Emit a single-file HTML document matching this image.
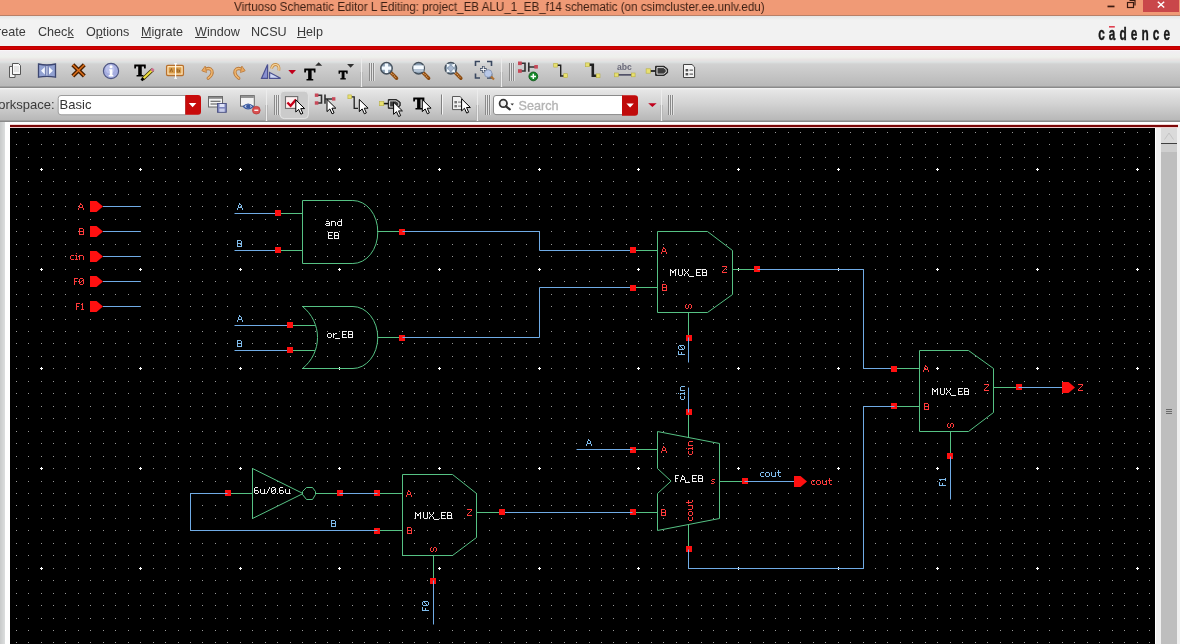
<!DOCTYPE html>
<html><head><meta charset="utf-8">
<style>
*{margin:0;padding:0;box-sizing:border-box}
html,body{width:1180px;height:644px;overflow:hidden;background:#f0f0f0;font-family:"Liberation Sans",sans-serif}
.a{position:absolute}
.mi,#title .t,svg{will-change:transform}
#title{left:0;top:0;width:1180px;height:16px;background:#f09a76;border-bottom:1px solid #b88068}
#title .t{left:234px;top:0px;font-size:12.3px;color:#3a1e12;white-space:nowrap;line-height:14px;transform:scaleX(0.946);transform-origin:0 0}
#menu{left:0;top:16px;width:1180px;height:30px;background:linear-gradient(#e4e6e6,#f2f2f2 4px,#f2f2f2)}
.mi{position:absolute;top:8px;font-size:12.6px;color:#3a3a3a;line-height:16px;white-space:nowrap}
.mi u{text-decoration:underline;text-decoration-thickness:1px;text-underline-offset:0.5px}
#red1{left:0;top:46px;width:1180px;height:4px;background:linear-gradient(#a80000,#d00000 1px,#d00000 3px,#a80000 4px)}
#tb1{left:0;top:50px;width:1180px;height:38px;background:linear-gradient(#fdfcfd 0px,#f2eef2 1px,#eef0ec 7px,#e8e2e2 10px,#dde2e2 12px,#d2d2d2 14px,#b8b8b8 36px,#8a8a8a 37px)}
#tb2{left:0;top:88px;width:1180px;height:34px;background:linear-gradient(#f6f6f6 0px,#e6e6e6 2px,#d2d2d2 16px,#b8b8b8 32px,#8a8a8a 33px)}
#cv{left:0;top:122px;width:1180px;height:522px;background:#f2f2f2}
</style></head><body>
<div id="title" class="a"><div class="a t">Virtuoso Schematic Editor L Editing: project_EB ALU_1_EB_f14 schematic (on csimcluster.ee.unlv.edu)</div>
</div>
<div id="menu" class="a">
<span class="mi" style="left:-3px">reate</span>
<span class="mi" style="left:38px">Chec<u>k</u></span>
<span class="mi" style="left:86px">O<u>p</u>tions</span>
<span class="mi" style="left:141px"><u>M</u>igrate</span>
<span class="mi" style="left:195px"><u>W</u>indow</span>
<span class="mi" style="left:251px">NCSU</span>
<span class="mi" style="left:297px"><u>H</u>elp</span>
</div>
<div id="red1" class="a"></div>
<div id="tb1" class="a"></div>
<div id="tb2" class="a"></div>
<div id="cv" class="a">
 <div class="a" style="left:0;top:0;width:5px;height:522px;background:linear-gradient(90deg,#c8caca,#dcdede)"></div>
 <div class="a" style="left:5px;top:0;width:5px;height:522px;background:#ffffff"></div>
</div>
<svg class="a" style="left:0;top:0" width="1180" height="644" font-family="Liberation Sans">
<!-- window controls -->
<rect x="1143" y="0" width="36" height="12" fill="#c9474a"/>
<path d="M1157.8 1.8 L1164.2 7.6 M1164.2 1.8 L1157.8 7.6" stroke="#fff" stroke-width="1.4"/>
<rect x="1107.5" y="5.6" width="7" height="1.7" fill="#3a1a10"/>
<rect x="1127.5" y="2.5" width="6" height="5" fill="none" stroke="#3a1a10" stroke-width="1.2"/>
<path d="M1129.5 0.5 H1135 V5.5" fill="none" stroke="#3a1a10" stroke-width="1.2"/>
<!-- cadence logo -->
<text x="0" y="0" font-size="16" font-weight="bold" fill="#1a1a1a" stroke="#1a1a1a" stroke-width="0.35" letter-spacing="5.5" transform="translate(1098.2,39.8) scale(0.74,1.2)">cadence</text><rect x="1109" y="26" width="5.8" height="1.6" fill="#e04050"/>
<!-- toolbar icons -->
<path d="M9.5 66.5 H15 V77.5 H9.5 Z" fill="#f4f4f4" stroke="#5a5a5a" stroke-width="1"/>
<path d="M12.5 63.5 H18.5 L20.5 65.5 V74.5 H12.5 Z" fill="#f8f8f8" stroke="#555" stroke-width="1"/>
<path d="M14 67 H19 M14 69 H19 M14 71 H19" stroke="#c8c8c8" stroke-width="0.8"/>
<path d="M38.5 64 Q47 66 55.5 64 V77.2 Q47 75.5 38.5 77.2 Z" fill="#92a2d2" stroke="#3c4670" stroke-width="1.3"/>
<rect x="45.3" y="66" width="3.2" height="9.5" fill="#6a78a8"/><rect x="46.2" y="66" width="1.4" height="9.5" fill="#c0cae8"/>
<path d="M41 70.8 L44.8 67 V74.6 Z M52.9 70.8 L49 67 V74.6 Z" fill="#f4f8ff"/>
<path d="M72.8 64.8 L84.3 76 M84.3 64.8 L72.8 76" stroke="#4a2000" stroke-width="4.2"/>
<path d="M72.8 64.8 L84.3 76 M84.3 64.8 L72.8 76" stroke="#e0701a" stroke-width="1.5"/>
<circle cx="111" cy="71" r="7.6" fill="#a6aee0" stroke="#4e5682" stroke-width="1.2"/>
<circle cx="110" cy="69" r="4.5" fill="#c4caf0" opacity="0.7"/>
<circle cx="111" cy="66.8" r="1.5" fill="#fff"/><path d="M109.2 69.3 H112.4 V75 H113.3 V76.4 H108.7 V75 H109.8 V70.6 H109.2 Z" fill="#fff"/>
<text x="134.6" y="75.8" font-family="Liberation Serif" font-weight="bold" font-size="16.5" fill="#000" stroke="#000" stroke-width="0.9">T</text>
<path d="M142.6 79.2 L152.8 69.6" stroke="#3a3000" stroke-width="3.6" stroke-linecap="butt"/>
<path d="M143 78.8 L152.4 70" stroke="#f0e040" stroke-width="2"/>
<path d="M151.4 70.8 L153.6 68.8" stroke="#d07090" stroke-width="3"/>
<path d="M141.4 80.4 L143.6 78.2" stroke="#000" stroke-width="2.6"/>
<rect x="166.6" y="65.3" width="16.8" height="10.2" rx="1.2" fill="#ffe6b8" stroke="#b8702c" stroke-width="1.3"/>
<rect x="168.6" y="67.3" width="12.8" height="6.2" fill="#d89a48"/>
<path d="M170 72 L171.5 68.5 L172.5 72 M177 68.5 V72 H179.5 V70 H177" fill="none" stroke="#8a5a20" stroke-width="0.8"/>
<path d="M175.6 63.5 V78.5 M174.2 63.8 H177 M174.2 78.2 H177" stroke="#fff" stroke-width="1.1"/>
<path d="M204 70 Q209.5 66.8 211.8 70.5 Q213.2 74.5 208.2 78.2" fill="none" stroke="#b8783a" stroke-width="3.2" stroke-linecap="round"/>
<path d="M204 70 Q209.5 66.8 211.8 70.5 Q213.2 74.5 208.2 78.2" fill="none" stroke="#f0b870" stroke-width="1.5" stroke-linecap="round"/>
<path d="M201.8 70.8 L205.2 66 L206.6 72.6 Z" fill="#eaa860" stroke="#b8783a" stroke-width="0.7"/>
<path d="M243 70 Q237.5 66.8 235.2 70.5 Q233.8 74.5 238.8 78.2" fill="none" stroke="#b8783a" stroke-width="3.2" stroke-linecap="round"/>
<path d="M243 70 Q237.5 66.8 235.2 70.5 Q233.8 74.5 238.8 78.2" fill="none" stroke="#f0b870" stroke-width="1.5" stroke-linecap="round"/>
<path d="M245.2 70.8 L241.8 66 L240.4 72.6 Z" fill="#eaa860" stroke="#b8783a" stroke-width="0.7"/>
<path d="M267.6 64.5 L261.5 78.3 H267.6 Z" fill="#8890d0" stroke="#4a5090" stroke-width="1.2"/>
<path d="M269.6 72.4 V78.3 H280.6 Z" fill="#d0d8f4" stroke="#4a5090" stroke-width="1.2"/>
<path d="M271.5 68.5 Q272.5 64.2 276 64.5 Q279.8 65.2 278.8 70.5" fill="none" stroke="#c89048" stroke-width="2.8"/>
<path d="M271.5 68.5 Q272.5 64.2 276 64.5 Q279.8 65.2 278.8 70.5" fill="none" stroke="#f8d8a0" stroke-width="1.2"/>
<path d="M288.3 70 H296 L292.15 74.3 Z" fill="#c0001c"/>
<text x="304.6" y="79.6" font-family="Liberation Serif" font-weight="bold" font-size="16.2" fill="#000" stroke="#000" stroke-width="0.9">T</text>
<path d="M315.2 65.8 L318.7 62.2 L322.2 65.8 Z" fill="#303030"/>
<text x="338.7" y="79.1" font-family="Liberation Serif" font-weight="bold" font-size="13" fill="#000" stroke="#000" stroke-width="0.8">T</text>
<path d="M347.1 63.9 H354.1 L350.6 67.7 Z" fill="#303030"/>
<rect x="361" y="56" width="1" height="31" fill="#ececec"/><rect x="360" y="72" width="1" height="15" fill="#b4b4b4" opacity="0.8"/><rect x="362" y="72" width="1" height="15" fill="#b4b4b4" opacity="0.8"/>
<rect x="369" y="63" width="1" height="18" fill="#8a8a8a"/><rect x="371" y="63" width="1" height="18" fill="#8a8a8a"/><rect x="373" y="63" width="1" height="18" fill="#8a8a8a"/><rect x="370" y="63" width="1" height="18" fill="#ececec" opacity="0.7"/><rect x="372" y="63" width="1" height="18" fill="#ececec" opacity="0.7"/><rect x="374" y="63" width="1" height="18" fill="#ececec" opacity="0.7"/>
<line x1="390.595" y1="72.295" x2="396.58" y2="78.28" stroke="#8a4a10" stroke-width="3.4" stroke-linecap="round"/><line x1="391.225" y1="72.925" x2="395.95" y2="77.65" stroke="#e0a060" stroke-width="1.4" stroke-dasharray="1 1"/><circle cx="386.5" cy="68.2" r="5.7" fill="#8ea2b6" stroke="#46525e" stroke-width="1.5"/><path d="M381.8 68.2 H391.2 M386.5 63.5 V72.9" stroke="#f4faff" stroke-width="3.2"/>
<line x1="422.69500000000005" y1="72.295" x2="428.68" y2="78.28" stroke="#8a4a10" stroke-width="3.4" stroke-linecap="round"/><line x1="423.32500000000005" y1="72.925" x2="428.05" y2="77.65" stroke="#e0a060" stroke-width="1.4" stroke-dasharray="1 1"/><circle cx="418.6" cy="68.2" r="5.7" fill="#8ea2b6" stroke="#46525e" stroke-width="1.5"/><rect x="413.4" y="65.4" width="10.4" height="3.8" fill="#f4faff"/><rect x="413.6" y="69.2" width="10" height="2.6" fill="#b8c8d8"/>
<line x1="454.89500000000004" y1="72.295" x2="460.88" y2="78.28" stroke="#8a4a10" stroke-width="3.4" stroke-linecap="round"/><line x1="455.52500000000003" y1="72.925" x2="460.25" y2="77.65" stroke="#e0a060" stroke-width="1.4" stroke-dasharray="1 1"/><circle cx="450.8" cy="68.2" r="5.7" fill="#8ea2b6" stroke="#46525e" stroke-width="1.5"/><path d="M446.2 63.6 l4 1.2 -2.8 2.8z M455.4 63.6 l-4 1.2 2.8 2.8z M446.2 72.8 l4 -1.2 -2.8 -2.8z M455.4 72.8 l-4 -1.2 2.8 -2.8z" fill="#f4faff"/><circle cx="450.8" cy="68.2" r="2.2" fill="#a8b8d0"/>
<path d="M475.5 66 V61.5 H480 M487 61.5 H491.5 V66 M475.5 73.5 V78 H480 M491.5 73.5 V78 H487" fill="none" stroke="#3a4860" stroke-width="1.6"/>
<path d="M480 69.4 H486.6 M483.3 66 V72.8" stroke="#3a4860" stroke-width="2.6"/><path d="M480.6 69.4 H486 M483.3 66.6 V72.2" stroke="#fff" stroke-width="1"/>
<line x1="490" y1="75.5" x2="494" y2="79.5" stroke="#b07030" stroke-width="2.2"/><circle cx="488.2" cy="73.5" r="3.8" fill="#b8c8e8" stroke="#8090b0" stroke-width="0.8"/>
<rect x="501" y="56" width="1" height="31" fill="#ececec"/><rect x="500" y="72" width="1" height="15" fill="#b4b4b4" opacity="0.8"/><rect x="502" y="72" width="1" height="15" fill="#b4b4b4" opacity="0.8"/>
<rect x="509" y="63" width="1" height="18" fill="#8a8a8a"/><rect x="511" y="63" width="1" height="18" fill="#8a8a8a"/><rect x="513" y="63" width="1" height="18" fill="#8a8a8a"/><rect x="510" y="63" width="1" height="18" fill="#ececec" opacity="0.7"/><rect x="512" y="63" width="1" height="18" fill="#ececec" opacity="0.7"/><rect x="514" y="63" width="1" height="18" fill="#ececec" opacity="0.7"/>
<path d="M521 63.3 H525 V71 H521 M528.8 62.5 V71.8 M528.8 67 H535" fill="none" stroke="#303030" stroke-width="1.6"/>
<rect x="518" y="61.5" width="3.8" height="3.6" fill="#c84858"/><rect x="518" y="69.2" width="3.8" height="3.6" fill="#c84858"/><rect x="534.3" y="65" width="3.6" height="3.6" fill="#c84858"/>
<circle cx="533.3" cy="76.4" r="4.4" fill="#148a28" stroke="#0a5014" stroke-width="0.8"/><path d="M530.6 76.4 H536 M533.3 73.7 V79.1" stroke="#fff" stroke-width="1.5"/>
<path d="M555.6 65.2 H560.7 V76 H565.6" fill="none" stroke="#202020" stroke-width="1.4"/>
<rect x="553.7" y="63.300000000000004" width="3.8" height="3.8" fill="#e8e070" stroke="#b8b040" stroke-width="0.6"/><rect x="563.7" y="73.69999999999999" width="3.8" height="3.8" fill="#e8e070" stroke="#b8b040" stroke-width="0.6"/>
<path d="M587.5 64.8 H592.8 V75.8 H598" fill="none" stroke="#202020" stroke-width="2.6"/>
<rect x="585.6" y="62.9" width="3.8" height="3.8" fill="#e8e070" stroke="#b8b040" stroke-width="0.6"/><rect x="596.2" y="73.89999999999999" width="3.8" height="3.8" fill="#e8e070" stroke="#b8b040" stroke-width="0.6"/>
<text x="617" y="69.8" font-size="8.6" fill="#6a6a7a" font-weight="bold">abc</text>
<path d="M616.4 74.9 H633.2" stroke="#202040" stroke-width="1.2"/><rect x="614.5" y="73.0" width="3.8" height="3.8" fill="#e8e070" stroke="#b8b040" stroke-width="0.6"/><rect x="631.3000000000001" y="73.0" width="3.8" height="3.8" fill="#e8e070" stroke="#b8b040" stroke-width="0.6"/>
<path d="M648.5 71 H656" stroke="#101010" stroke-width="1.6"/><rect x="646.0999999999999" y="68.8" width="4.4" height="4.4" fill="#e8e070" stroke="#b8b040" stroke-width="0.6"/>
<path d="M655.6 66.3 H664 L667.6 69 V72.8 L664 75.4 H655.6 Z" fill="#3c3c3c" stroke="#202020" stroke-width="1"/>
<path d="M657 67.6 H663.4 L666.2 69.6 V72.2 L663.4 74.1 H657 Z" fill="none" stroke="#fff" stroke-width="0.8"/>
<path d="M683.5 64.5 H692 L694.6 67 V77.5 H683.5 Z" fill="#f4f4f4" stroke="#444" stroke-width="1"/>
<rect x="685.6" y="69" width="2.6" height="2.4" fill="#555"/><rect x="685.6" y="73" width="2.6" height="2.4" fill="#555"/><path d="M689.5 70.2 H693 M689.5 74.2 H693" stroke="#666" stroke-width="1.2"/>
<text x="-1.8" y="108.6" font-size="13" fill="#3a3a3a">orkspace:</text>
<path d="M61 95.5 H185.5 V114.8 H61 Q58.2 114.8 58.2 112 V98.3 Q58.2 95.5 61 95.5 Z" fill="#fff" stroke="#9c9c9c" stroke-width="1"/>
<path d="M185.3 95 H198 Q201 95 201 98 V111.8 Q201 114.8 198 114.8 H185.3 Z" fill="#c80a0a"/>
<path d="M188.8 103 H196.4 L192.6 107.2 Z" fill="#fff"/>
<text x="59.6" y="108.6" font-size="13" fill="#333">Basic</text>
<rect x="208.5" y="96.5" width="14" height="10.5" fill="#f4f4f4" stroke="#6a6a6a" stroke-width="1"/><rect x="209" y="97" width="13" height="1.8" fill="#8a8a8a"/>
<path d="M210.5 101.3 H220.5 M210.5 104 H218" stroke="#505050" stroke-width="1.1"/>
<rect x="217.5" y="103.5" width="8.8" height="8.8" fill="#8088c0" stroke="#4a5080" stroke-width="0.9"/><rect x="219.5" y="104" width="5" height="3" fill="#e0e4f8"/><rect x="219.3" y="108.6" width="5.4" height="3.2" fill="#c8cce8"/>
<rect x="240.5" y="95.6" width="13.8" height="10.6" fill="#f2f2f2" stroke="#6a6a6a" stroke-width="1"/><rect x="241" y="96.1" width="12.8" height="1.8" fill="#8a8a8a"/>
<path d="M243.3 106.5 Q248 101.5 253.2 106.5 Q248 111.5 243.3 106.5 Z" fill="#c8d4f0" stroke="#3a5aa0" stroke-width="1.2"/><circle cx="248.3" cy="106.5" r="2.2" fill="#3a5aa0"/>
<circle cx="256.3" cy="110.2" r="3.9" fill="#d85050" stroke="#b03030" stroke-width="0.6"/><rect x="254.3" y="109.6" width="4" height="1.3" fill="#fff"/>
<rect x="266" y="89" width="1" height="32" fill="#ececec"/><rect x="265" y="105" width="1" height="16" fill="#b4b4b4" opacity="0.8"/><rect x="267" y="105" width="1" height="16" fill="#b4b4b4" opacity="0.8"/>
<rect x="274" y="95" width="1" height="20" fill="#8a8a8a"/><rect x="276" y="95" width="1" height="20" fill="#8a8a8a"/><rect x="278" y="95" width="1" height="20" fill="#8a8a8a"/><rect x="275" y="95" width="1" height="20" fill="#ececec" opacity="0.7"/><rect x="277" y="95" width="1" height="20" fill="#ececec" opacity="0.7"/><rect x="279" y="95" width="1" height="20" fill="#ececec" opacity="0.7"/>
<rect x="280.2" y="91.2" width="28.2" height="27.4" rx="4" fill="#cbcbcb" stroke="#e4e4e4" stroke-width="1"/>
<rect x="285.5" y="96.6" width="12.2" height="11.8" fill="#fdf0f0" stroke="#6c6c6c" stroke-width="1.1"/>
<path d="M287.4 102.5 L290.6 105.8 L296 99.5" fill="none" stroke="#c8001a" stroke-width="2.4"/>
<path d="M295.80 99.90 L295.80 112.00 L298.66 109.36 L300.86 114.20 L302.84 113.32 L300.75 108.59 L304.60 108.59Z" fill="#fff" stroke="#000" stroke-width="1" stroke-linejoin="miter"/>
<path d="M317 95.2 H321.5 V103 H317 M325 94.5 V103.8 M325 99 H333" fill="none" stroke="#303030" stroke-width="1.6"/>
<rect x="314.8" y="93.5" width="3.6" height="3.4" fill="#c84858"/><rect x="314.8" y="101.3" width="3.6" height="3.4" fill="#c84858"/><rect x="332" y="97.2" width="3.4" height="3.4" fill="#c84858"/>
<path d="M327.00 99.50 L327.00 111.60 L329.86 108.96 L332.06 113.80 L334.04 112.92 L331.95 108.19 L335.80 108.19Z" fill="#fff" stroke="#000" stroke-width="1" stroke-linejoin="miter"/>
<path d="M349.8 96.8 H354.2 V108.3 H358" fill="none" stroke="#202020" stroke-width="1.3"/><rect x="347.90000000000003" y="94.89999999999999" width="3.8" height="3.8" fill="#e8e070" stroke="#b8b040" stroke-width="0.6"/>
<path d="M359.30 99.50 L359.30 111.60 L362.16 108.96 L364.36 113.80 L366.34 112.92 L364.25 108.19 L368.10 108.19Z" fill="#fff" stroke="#000" stroke-width="1" stroke-linejoin="miter"/>
<path d="M381.7 103.6 H388.5" stroke="#101010" stroke-width="1.6"/><rect x="379.59999999999997" y="101.5" width="4.2" height="4.2" fill="#e8e070" stroke="#b8b040" stroke-width="0.6"/>
<path d="M388.3 99.6 H396.5 L400.2 102.3 V105.8 L396.5 108.3 H388.3 Z" fill="#3c3c3c" stroke="#202020" stroke-width="1"/>
<path d="M389.6 100.9 H395.9 L398.8 102.9 V105.2 L395.9 107 H389.6 Z" fill="none" stroke="#fff" stroke-width="0.8"/>
<path d="M393.60 102.20 L393.60 114.30 L396.46 111.66 L398.66 116.50 L400.64 115.62 L398.55 110.89 L402.40 110.89Z" fill="#fff" stroke="#000" stroke-width="1" stroke-linejoin="miter"/>
<text x="413.5" y="108.7" font-family="Liberation Serif" font-weight="bold" font-size="16" fill="#000" stroke="#000" stroke-width="0.9">T</text>
<path d="M422.30 99.50 L422.30 111.60 L425.16 108.96 L427.36 113.80 L429.34 112.92 L427.25 108.19 L431.10 108.19Z" fill="#fff" stroke="#000" stroke-width="1" stroke-linejoin="miter"/>
<rect x="441" y="94.5" width="1" height="20" fill="#808080"/><rect x="442" y="94.5" width="1" height="20" fill="#f4f4f4"/>
<path d="M452.5 96.5 H460 L462.6 99 V109.6 H452.5 Z" fill="#f0f0f0" stroke="#5a5a5a" stroke-width="1"/>
<rect x="454.4" y="101" width="2.6" height="2.4" fill="#777"/><rect x="454.4" y="105" width="2.6" height="2.4" fill="#777"/><path d="M458 102.2 H461.5 M458 106.2 H461.5" stroke="#888" stroke-width="1.2"/>
<path d="M461.60 98.80 L461.60 110.90 L464.46 108.26 L466.66 113.10 L468.64 112.22 L466.55 107.49 L470.40 107.49Z" fill="#fff" stroke="#000" stroke-width="1" stroke-linejoin="miter"/>
<rect x="477" y="89" width="1" height="32" fill="#ececec"/><rect x="476" y="105" width="1" height="16" fill="#b4b4b4" opacity="0.8"/><rect x="478" y="105" width="1" height="16" fill="#b4b4b4" opacity="0.8"/>
<rect x="485" y="95" width="1" height="20" fill="#8a8a8a"/><rect x="487" y="95" width="1" height="20" fill="#8a8a8a"/><rect x="489" y="95" width="1" height="20" fill="#8a8a8a"/><rect x="486" y="95" width="1" height="20" fill="#ececec" opacity="0.7"/><rect x="488" y="95" width="1" height="20" fill="#ececec" opacity="0.7"/><rect x="490" y="95" width="1" height="20" fill="#ececec" opacity="0.7"/>
<path d="M496 95.5 H622.5 V114.6 H496 Q493.5 114.6 493.5 112 V98 Q493.5 95.5 496 95.5 Z" fill="#fff" stroke="#8a8a8a" stroke-width="1"/>
<path d="M622 95.2 H634.8 Q638 95.2 638 98.4 V112.6 Q638 115.8 634.8 115.8 H622 Z" fill="#c00a0a"/>
<path d="M626.4 103.4 H633.8 L630.1 107.6 Z" fill="#fff"/>
<circle cx="503.3" cy="103.4" r="3.7" fill="#f0f0f0" stroke="#333" stroke-width="1.8"/><path d="M506 106.3 L509.8 109.4" stroke="#333" stroke-width="2.2" stroke-linecap="round"/><path d="M510.5 103.6 H514 L512.25 105.4 Z" fill="#333"/>
<text x="518.6" y="109.8" font-size="12.6" fill="#b4b4b4" stroke="#b4b4b4" stroke-width="0.35">Search</text>
<path d="M648.2 103.2 H656.6 L652.4 107 Z" fill="#c0001c"/>
<rect x="661" y="89" width="1" height="32" fill="#ececec"/><rect x="660" y="105" width="1" height="16" fill="#b4b4b4" opacity="0.8"/><rect x="662" y="105" width="1" height="16" fill="#b4b4b4" opacity="0.8"/>
<rect x="668" y="95" width="1" height="20" fill="#8a8a8a"/><rect x="670" y="95" width="1" height="20" fill="#8a8a8a"/><rect x="672" y="95" width="1" height="20" fill="#8a8a8a"/><rect x="669" y="95" width="1" height="20" fill="#ececec" opacity="0.7"/><rect x="671" y="95" width="1" height="20" fill="#ececec" opacity="0.7"/><rect x="673" y="95" width="1" height="20" fill="#ececec" opacity="0.7"/>
<!-- canvas frame -->
<rect x="10" y="122" width="1170" height="2" fill="#fff"/>
<rect x="10" y="124" width="1168" height="1" fill="#f4d8d8"/>
<rect x="10" y="125" width="1168" height="2" fill="#7c0808"/>
<rect x="10" y="127" width="1168" height="1" fill="#f0d0d0"/>
<rect x="1155" y="128" width="25" height="516" fill="#f0f0f0"/>
<rect x="1155" y="128" width="1" height="516" fill="#fff"/>
<rect x="1161" y="128" width="16" height="16" fill="#dadada"/>
<rect x="1161" y="143" width="16" height="1" fill="#404040"/>
<path d="M1164.5 139.5 L1169 133 L1173.5 139.5" fill="none" stroke="#c4c4c4" stroke-width="1"/>
<rect x="1161" y="144" width="16" height="500" fill="#bebebe"/>
<rect x="1161" y="144" width="16" height="8" fill="#cfcfcf"/>
<path d="M1166 409.5 H1172 M1166 411.5 H1172 M1166 413.5 H1172" stroke="#6a6a6a" stroke-width="1"/>
<rect x="10" y="128" width="1145" height="516" fill="#000"/>
<path d="M16 132h1v1h-1zM16 144h1v1h-1zM16 157h1v1h-1zM16 169h1v1h-1zM16 181h1v1h-1zM16 194h1v1h-1zM16 206h1v1h-1zM16 219h1v1h-1zM16 231h1v1h-1zM16 244h1v1h-1zM16 256h1v1h-1zM16 269h1v1h-1zM16 281h1v1h-1zM16 294h1v1h-1zM16 306h1v1h-1zM16 319h1v1h-1zM16 331h1v1h-1zM16 343h1v1h-1zM16 356h1v1h-1zM16 368h1v1h-1zM16 381h1v1h-1zM16 393h1v1h-1zM16 406h1v1h-1zM16 418h1v1h-1zM16 431h1v1h-1zM16 443h1v1h-1zM16 456h1v1h-1zM16 468h1v1h-1zM16 481h1v1h-1zM16 493h1v1h-1zM16 505h1v1h-1zM16 518h1v1h-1zM16 530h1v1h-1zM16 543h1v1h-1zM16 555h1v1h-1zM16 568h1v1h-1zM16 580h1v1h-1zM16 593h1v1h-1zM16 605h1v1h-1zM16 618h1v1h-1zM16 630h1v1h-1zM16 642h1v1h-1zM28 132h1v1h-1zM28 144h1v1h-1zM28 157h1v1h-1zM28 169h1v1h-1zM28 181h1v1h-1zM28 194h1v1h-1zM28 206h1v1h-1zM28 219h1v1h-1zM28 231h1v1h-1zM28 244h1v1h-1zM28 256h1v1h-1zM28 269h1v1h-1zM28 281h1v1h-1zM28 294h1v1h-1zM28 306h1v1h-1zM28 319h1v1h-1zM28 331h1v1h-1zM28 343h1v1h-1zM28 356h1v1h-1zM28 368h1v1h-1zM28 381h1v1h-1zM28 393h1v1h-1zM28 406h1v1h-1zM28 418h1v1h-1zM28 431h1v1h-1zM28 443h1v1h-1zM28 456h1v1h-1zM28 468h1v1h-1zM28 481h1v1h-1zM28 493h1v1h-1zM28 505h1v1h-1zM28 518h1v1h-1zM28 530h1v1h-1zM28 543h1v1h-1zM28 555h1v1h-1zM28 568h1v1h-1zM28 580h1v1h-1zM28 593h1v1h-1zM28 605h1v1h-1zM28 618h1v1h-1zM28 630h1v1h-1zM28 642h1v1h-1zM41 132h1v1h-1zM41 144h1v1h-1zM41 157h1v1h-1zM41 181h1v1h-1zM41 194h1v1h-1zM41 206h1v1h-1zM41 219h1v1h-1zM41 231h1v1h-1zM41 244h1v1h-1zM41 256h1v1h-1zM41 281h1v1h-1zM41 294h1v1h-1zM41 306h1v1h-1zM41 319h1v1h-1zM41 331h1v1h-1zM41 343h1v1h-1zM41 356h1v1h-1zM41 381h1v1h-1zM41 393h1v1h-1zM41 406h1v1h-1zM41 418h1v1h-1zM41 431h1v1h-1zM41 443h1v1h-1zM41 456h1v1h-1zM41 481h1v1h-1zM41 493h1v1h-1zM41 505h1v1h-1zM41 518h1v1h-1zM41 530h1v1h-1zM41 543h1v1h-1zM41 555h1v1h-1zM41 580h1v1h-1zM41 593h1v1h-1zM41 605h1v1h-1zM41 618h1v1h-1zM41 630h1v1h-1zM41 642h1v1h-1zM53 132h1v1h-1zM53 144h1v1h-1zM53 157h1v1h-1zM53 169h1v1h-1zM53 181h1v1h-1zM53 194h1v1h-1zM53 206h1v1h-1zM53 219h1v1h-1zM53 231h1v1h-1zM53 244h1v1h-1zM53 256h1v1h-1zM53 269h1v1h-1zM53 281h1v1h-1zM53 294h1v1h-1zM53 306h1v1h-1zM53 319h1v1h-1zM53 331h1v1h-1zM53 343h1v1h-1zM53 356h1v1h-1zM53 368h1v1h-1zM53 381h1v1h-1zM53 393h1v1h-1zM53 406h1v1h-1zM53 418h1v1h-1zM53 431h1v1h-1zM53 443h1v1h-1zM53 456h1v1h-1zM53 468h1v1h-1zM53 481h1v1h-1zM53 493h1v1h-1zM53 505h1v1h-1zM53 518h1v1h-1zM53 530h1v1h-1zM53 543h1v1h-1zM53 555h1v1h-1zM53 568h1v1h-1zM53 580h1v1h-1zM53 593h1v1h-1zM53 605h1v1h-1zM53 618h1v1h-1zM53 630h1v1h-1zM53 642h1v1h-1zM65 132h1v1h-1zM65 144h1v1h-1zM65 157h1v1h-1zM65 169h1v1h-1zM65 181h1v1h-1zM65 194h1v1h-1zM65 206h1v1h-1zM65 219h1v1h-1zM65 231h1v1h-1zM65 244h1v1h-1zM65 256h1v1h-1zM65 269h1v1h-1zM65 281h1v1h-1zM65 294h1v1h-1zM65 306h1v1h-1zM65 319h1v1h-1zM65 331h1v1h-1zM65 343h1v1h-1zM65 356h1v1h-1zM65 368h1v1h-1zM65 381h1v1h-1zM65 393h1v1h-1zM65 406h1v1h-1zM65 418h1v1h-1zM65 431h1v1h-1zM65 443h1v1h-1zM65 456h1v1h-1zM65 468h1v1h-1zM65 481h1v1h-1zM65 493h1v1h-1zM65 505h1v1h-1zM65 518h1v1h-1zM65 530h1v1h-1zM65 543h1v1h-1zM65 555h1v1h-1zM65 568h1v1h-1zM65 580h1v1h-1zM65 593h1v1h-1zM65 605h1v1h-1zM65 618h1v1h-1zM65 630h1v1h-1zM65 642h1v1h-1zM78 132h1v1h-1zM78 144h1v1h-1zM78 157h1v1h-1zM78 169h1v1h-1zM78 181h1v1h-1zM78 194h1v1h-1zM78 206h1v1h-1zM78 219h1v1h-1zM78 231h1v1h-1zM78 244h1v1h-1zM78 256h1v1h-1zM78 269h1v1h-1zM78 281h1v1h-1zM78 294h1v1h-1zM78 306h1v1h-1zM78 319h1v1h-1zM78 331h1v1h-1zM78 343h1v1h-1zM78 356h1v1h-1zM78 368h1v1h-1zM78 381h1v1h-1zM78 393h1v1h-1zM78 406h1v1h-1zM78 418h1v1h-1zM78 431h1v1h-1zM78 443h1v1h-1zM78 456h1v1h-1zM78 468h1v1h-1zM78 481h1v1h-1zM78 493h1v1h-1zM78 505h1v1h-1zM78 518h1v1h-1zM78 530h1v1h-1zM78 543h1v1h-1zM78 555h1v1h-1zM78 568h1v1h-1zM78 580h1v1h-1zM78 593h1v1h-1zM78 605h1v1h-1zM78 618h1v1h-1zM78 630h1v1h-1zM78 642h1v1h-1zM90 132h1v1h-1zM90 144h1v1h-1zM90 157h1v1h-1zM90 169h1v1h-1zM90 181h1v1h-1zM90 194h1v1h-1zM90 206h1v1h-1zM90 219h1v1h-1zM90 231h1v1h-1zM90 244h1v1h-1zM90 256h1v1h-1zM90 269h1v1h-1zM90 281h1v1h-1zM90 294h1v1h-1zM90 306h1v1h-1zM90 319h1v1h-1zM90 331h1v1h-1zM90 343h1v1h-1zM90 356h1v1h-1zM90 368h1v1h-1zM90 381h1v1h-1zM90 393h1v1h-1zM90 406h1v1h-1zM90 418h1v1h-1zM90 431h1v1h-1zM90 443h1v1h-1zM90 456h1v1h-1zM90 468h1v1h-1zM90 481h1v1h-1zM90 493h1v1h-1zM90 505h1v1h-1zM90 518h1v1h-1zM90 530h1v1h-1zM90 543h1v1h-1zM90 555h1v1h-1zM90 568h1v1h-1zM90 580h1v1h-1zM90 593h1v1h-1zM90 605h1v1h-1zM90 618h1v1h-1zM90 630h1v1h-1zM90 642h1v1h-1zM103 132h1v1h-1zM103 144h1v1h-1zM103 157h1v1h-1zM103 169h1v1h-1zM103 181h1v1h-1zM103 194h1v1h-1zM103 206h1v1h-1zM103 219h1v1h-1zM103 231h1v1h-1zM103 244h1v1h-1zM103 256h1v1h-1zM103 269h1v1h-1zM103 281h1v1h-1zM103 294h1v1h-1zM103 306h1v1h-1zM103 319h1v1h-1zM103 331h1v1h-1zM103 343h1v1h-1zM103 356h1v1h-1zM103 368h1v1h-1zM103 381h1v1h-1zM103 393h1v1h-1zM103 406h1v1h-1zM103 418h1v1h-1zM103 431h1v1h-1zM103 443h1v1h-1zM103 456h1v1h-1zM103 468h1v1h-1zM103 481h1v1h-1zM103 493h1v1h-1zM103 505h1v1h-1zM103 518h1v1h-1zM103 530h1v1h-1zM103 543h1v1h-1zM103 555h1v1h-1zM103 568h1v1h-1zM103 580h1v1h-1zM103 593h1v1h-1zM103 605h1v1h-1zM103 618h1v1h-1zM103 630h1v1h-1zM103 642h1v1h-1zM115 132h1v1h-1zM115 144h1v1h-1zM115 157h1v1h-1zM115 169h1v1h-1zM115 181h1v1h-1zM115 194h1v1h-1zM115 206h1v1h-1zM115 219h1v1h-1zM115 231h1v1h-1zM115 244h1v1h-1zM115 256h1v1h-1zM115 269h1v1h-1zM115 281h1v1h-1zM115 294h1v1h-1zM115 306h1v1h-1zM115 319h1v1h-1zM115 331h1v1h-1zM115 343h1v1h-1zM115 356h1v1h-1zM115 368h1v1h-1zM115 381h1v1h-1zM115 393h1v1h-1zM115 406h1v1h-1zM115 418h1v1h-1zM115 431h1v1h-1zM115 443h1v1h-1zM115 456h1v1h-1zM115 468h1v1h-1zM115 481h1v1h-1zM115 493h1v1h-1zM115 505h1v1h-1zM115 518h1v1h-1zM115 530h1v1h-1zM115 543h1v1h-1zM115 555h1v1h-1zM115 568h1v1h-1zM115 580h1v1h-1zM115 593h1v1h-1zM115 605h1v1h-1zM115 618h1v1h-1zM115 630h1v1h-1zM115 642h1v1h-1zM128 132h1v1h-1zM128 144h1v1h-1zM128 157h1v1h-1zM128 169h1v1h-1zM128 181h1v1h-1zM128 194h1v1h-1zM128 206h1v1h-1zM128 219h1v1h-1zM128 231h1v1h-1zM128 244h1v1h-1zM128 256h1v1h-1zM128 269h1v1h-1zM128 281h1v1h-1zM128 294h1v1h-1zM128 306h1v1h-1zM128 319h1v1h-1zM128 331h1v1h-1zM128 343h1v1h-1zM128 356h1v1h-1zM128 368h1v1h-1zM128 381h1v1h-1zM128 393h1v1h-1zM128 406h1v1h-1zM128 418h1v1h-1zM128 431h1v1h-1zM128 443h1v1h-1zM128 456h1v1h-1zM128 468h1v1h-1zM128 481h1v1h-1zM128 493h1v1h-1zM128 505h1v1h-1zM128 518h1v1h-1zM128 530h1v1h-1zM128 543h1v1h-1zM128 555h1v1h-1zM128 568h1v1h-1zM128 580h1v1h-1zM128 593h1v1h-1zM128 605h1v1h-1zM128 618h1v1h-1zM128 630h1v1h-1zM128 642h1v1h-1zM140 132h1v1h-1zM140 144h1v1h-1zM140 157h1v1h-1zM140 181h1v1h-1zM140 194h1v1h-1zM140 206h1v1h-1zM140 219h1v1h-1zM140 231h1v1h-1zM140 244h1v1h-1zM140 256h1v1h-1zM140 281h1v1h-1zM140 294h1v1h-1zM140 306h1v1h-1zM140 319h1v1h-1zM140 331h1v1h-1zM140 343h1v1h-1zM140 356h1v1h-1zM140 381h1v1h-1zM140 393h1v1h-1zM140 406h1v1h-1zM140 418h1v1h-1zM140 431h1v1h-1zM140 443h1v1h-1zM140 456h1v1h-1zM140 481h1v1h-1zM140 493h1v1h-1zM140 505h1v1h-1zM140 518h1v1h-1zM140 530h1v1h-1zM140 543h1v1h-1zM140 555h1v1h-1zM140 580h1v1h-1zM140 593h1v1h-1zM140 605h1v1h-1zM140 618h1v1h-1zM140 630h1v1h-1zM140 642h1v1h-1zM153 132h1v1h-1zM153 144h1v1h-1zM153 157h1v1h-1zM153 169h1v1h-1zM153 181h1v1h-1zM153 194h1v1h-1zM153 206h1v1h-1zM153 219h1v1h-1zM153 231h1v1h-1zM153 244h1v1h-1zM153 256h1v1h-1zM153 269h1v1h-1zM153 281h1v1h-1zM153 294h1v1h-1zM153 306h1v1h-1zM153 319h1v1h-1zM153 331h1v1h-1zM153 343h1v1h-1zM153 356h1v1h-1zM153 368h1v1h-1zM153 381h1v1h-1zM153 393h1v1h-1zM153 406h1v1h-1zM153 418h1v1h-1zM153 431h1v1h-1zM153 443h1v1h-1zM153 456h1v1h-1zM153 468h1v1h-1zM153 481h1v1h-1zM153 493h1v1h-1zM153 505h1v1h-1zM153 518h1v1h-1zM153 530h1v1h-1zM153 543h1v1h-1zM153 555h1v1h-1zM153 568h1v1h-1zM153 580h1v1h-1zM153 593h1v1h-1zM153 605h1v1h-1zM153 618h1v1h-1zM153 630h1v1h-1zM153 642h1v1h-1zM165 132h1v1h-1zM165 144h1v1h-1zM165 157h1v1h-1zM165 169h1v1h-1zM165 181h1v1h-1zM165 194h1v1h-1zM165 206h1v1h-1zM165 219h1v1h-1zM165 231h1v1h-1zM165 244h1v1h-1zM165 256h1v1h-1zM165 269h1v1h-1zM165 281h1v1h-1zM165 294h1v1h-1zM165 306h1v1h-1zM165 319h1v1h-1zM165 331h1v1h-1zM165 343h1v1h-1zM165 356h1v1h-1zM165 368h1v1h-1zM165 381h1v1h-1zM165 393h1v1h-1zM165 406h1v1h-1zM165 418h1v1h-1zM165 431h1v1h-1zM165 443h1v1h-1zM165 456h1v1h-1zM165 468h1v1h-1zM165 481h1v1h-1zM165 493h1v1h-1zM165 505h1v1h-1zM165 518h1v1h-1zM165 530h1v1h-1zM165 543h1v1h-1zM165 555h1v1h-1zM165 568h1v1h-1zM165 580h1v1h-1zM165 593h1v1h-1zM165 605h1v1h-1zM165 618h1v1h-1zM165 630h1v1h-1zM165 642h1v1h-1zM178 132h1v1h-1zM178 144h1v1h-1zM178 157h1v1h-1zM178 169h1v1h-1zM178 181h1v1h-1zM178 194h1v1h-1zM178 206h1v1h-1zM178 219h1v1h-1zM178 231h1v1h-1zM178 244h1v1h-1zM178 256h1v1h-1zM178 269h1v1h-1zM178 281h1v1h-1zM178 294h1v1h-1zM178 306h1v1h-1zM178 319h1v1h-1zM178 331h1v1h-1zM178 343h1v1h-1zM178 356h1v1h-1zM178 368h1v1h-1zM178 381h1v1h-1zM178 393h1v1h-1zM178 406h1v1h-1zM178 418h1v1h-1zM178 431h1v1h-1zM178 443h1v1h-1zM178 456h1v1h-1zM178 468h1v1h-1zM178 481h1v1h-1zM178 493h1v1h-1zM178 505h1v1h-1zM178 518h1v1h-1zM178 530h1v1h-1zM178 543h1v1h-1zM178 555h1v1h-1zM178 568h1v1h-1zM178 580h1v1h-1zM178 593h1v1h-1zM178 605h1v1h-1zM178 618h1v1h-1zM178 630h1v1h-1zM178 642h1v1h-1zM190 132h1v1h-1zM190 144h1v1h-1zM190 157h1v1h-1zM190 169h1v1h-1zM190 181h1v1h-1zM190 194h1v1h-1zM190 206h1v1h-1zM190 219h1v1h-1zM190 231h1v1h-1zM190 244h1v1h-1zM190 256h1v1h-1zM190 269h1v1h-1zM190 281h1v1h-1zM190 294h1v1h-1zM190 306h1v1h-1zM190 319h1v1h-1zM190 331h1v1h-1zM190 343h1v1h-1zM190 356h1v1h-1zM190 368h1v1h-1zM190 381h1v1h-1zM190 393h1v1h-1zM190 406h1v1h-1zM190 418h1v1h-1zM190 431h1v1h-1zM190 443h1v1h-1zM190 456h1v1h-1zM190 468h1v1h-1zM190 481h1v1h-1zM190 493h1v1h-1zM190 505h1v1h-1zM190 518h1v1h-1zM190 530h1v1h-1zM190 543h1v1h-1zM190 555h1v1h-1zM190 568h1v1h-1zM190 580h1v1h-1zM190 593h1v1h-1zM190 605h1v1h-1zM190 618h1v1h-1zM190 630h1v1h-1zM190 642h1v1h-1zM202 132h1v1h-1zM202 144h1v1h-1zM202 157h1v1h-1zM202 169h1v1h-1zM202 181h1v1h-1zM202 194h1v1h-1zM202 206h1v1h-1zM202 219h1v1h-1zM202 231h1v1h-1zM202 244h1v1h-1zM202 256h1v1h-1zM202 269h1v1h-1zM202 281h1v1h-1zM202 294h1v1h-1zM202 306h1v1h-1zM202 319h1v1h-1zM202 331h1v1h-1zM202 343h1v1h-1zM202 356h1v1h-1zM202 368h1v1h-1zM202 381h1v1h-1zM202 393h1v1h-1zM202 406h1v1h-1zM202 418h1v1h-1zM202 431h1v1h-1zM202 443h1v1h-1zM202 456h1v1h-1zM202 468h1v1h-1zM202 481h1v1h-1zM202 493h1v1h-1zM202 505h1v1h-1zM202 518h1v1h-1zM202 530h1v1h-1zM202 543h1v1h-1zM202 555h1v1h-1zM202 568h1v1h-1zM202 580h1v1h-1zM202 593h1v1h-1zM202 605h1v1h-1zM202 618h1v1h-1zM202 630h1v1h-1zM202 642h1v1h-1zM215 132h1v1h-1zM215 144h1v1h-1zM215 157h1v1h-1zM215 169h1v1h-1zM215 181h1v1h-1zM215 194h1v1h-1zM215 206h1v1h-1zM215 219h1v1h-1zM215 231h1v1h-1zM215 244h1v1h-1zM215 256h1v1h-1zM215 269h1v1h-1zM215 281h1v1h-1zM215 294h1v1h-1zM215 306h1v1h-1zM215 319h1v1h-1zM215 331h1v1h-1zM215 343h1v1h-1zM215 356h1v1h-1zM215 368h1v1h-1zM215 381h1v1h-1zM215 393h1v1h-1zM215 406h1v1h-1zM215 418h1v1h-1zM215 431h1v1h-1zM215 443h1v1h-1zM215 456h1v1h-1zM215 468h1v1h-1zM215 481h1v1h-1zM215 493h1v1h-1zM215 505h1v1h-1zM215 518h1v1h-1zM215 530h1v1h-1zM215 543h1v1h-1zM215 555h1v1h-1zM215 568h1v1h-1zM215 580h1v1h-1zM215 593h1v1h-1zM215 605h1v1h-1zM215 618h1v1h-1zM215 630h1v1h-1zM215 642h1v1h-1zM227 132h1v1h-1zM227 144h1v1h-1zM227 157h1v1h-1zM227 169h1v1h-1zM227 181h1v1h-1zM227 194h1v1h-1zM227 206h1v1h-1zM227 219h1v1h-1zM227 231h1v1h-1zM227 244h1v1h-1zM227 256h1v1h-1zM227 269h1v1h-1zM227 281h1v1h-1zM227 294h1v1h-1zM227 306h1v1h-1zM227 319h1v1h-1zM227 331h1v1h-1zM227 343h1v1h-1zM227 356h1v1h-1zM227 368h1v1h-1zM227 381h1v1h-1zM227 393h1v1h-1zM227 406h1v1h-1zM227 418h1v1h-1zM227 431h1v1h-1zM227 443h1v1h-1zM227 456h1v1h-1zM227 468h1v1h-1zM227 481h1v1h-1zM227 493h1v1h-1zM227 505h1v1h-1zM227 518h1v1h-1zM227 530h1v1h-1zM227 543h1v1h-1zM227 555h1v1h-1zM227 568h1v1h-1zM227 580h1v1h-1zM227 593h1v1h-1zM227 605h1v1h-1zM227 618h1v1h-1zM227 630h1v1h-1zM227 642h1v1h-1zM240 132h1v1h-1zM240 144h1v1h-1zM240 157h1v1h-1zM240 181h1v1h-1zM240 194h1v1h-1zM240 206h1v1h-1zM240 219h1v1h-1zM240 231h1v1h-1zM240 244h1v1h-1zM240 256h1v1h-1zM240 281h1v1h-1zM240 294h1v1h-1zM240 306h1v1h-1zM240 319h1v1h-1zM240 331h1v1h-1zM240 343h1v1h-1zM240 356h1v1h-1zM240 381h1v1h-1zM240 393h1v1h-1zM240 406h1v1h-1zM240 418h1v1h-1zM240 431h1v1h-1zM240 443h1v1h-1zM240 456h1v1h-1zM240 481h1v1h-1zM240 493h1v1h-1zM240 505h1v1h-1zM240 518h1v1h-1zM240 530h1v1h-1zM240 543h1v1h-1zM240 555h1v1h-1zM240 580h1v1h-1zM240 593h1v1h-1zM240 605h1v1h-1zM240 618h1v1h-1zM240 630h1v1h-1zM240 642h1v1h-1zM252 132h1v1h-1zM252 144h1v1h-1zM252 157h1v1h-1zM252 169h1v1h-1zM252 181h1v1h-1zM252 194h1v1h-1zM252 206h1v1h-1zM252 219h1v1h-1zM252 231h1v1h-1zM252 244h1v1h-1zM252 256h1v1h-1zM252 269h1v1h-1zM252 281h1v1h-1zM252 294h1v1h-1zM252 306h1v1h-1zM252 319h1v1h-1zM252 331h1v1h-1zM252 343h1v1h-1zM252 356h1v1h-1zM252 368h1v1h-1zM252 381h1v1h-1zM252 393h1v1h-1zM252 406h1v1h-1zM252 418h1v1h-1zM252 431h1v1h-1zM252 443h1v1h-1zM252 456h1v1h-1zM252 468h1v1h-1zM252 481h1v1h-1zM252 493h1v1h-1zM252 505h1v1h-1zM252 518h1v1h-1zM252 530h1v1h-1zM252 543h1v1h-1zM252 555h1v1h-1zM252 568h1v1h-1zM252 580h1v1h-1zM252 593h1v1h-1zM252 605h1v1h-1zM252 618h1v1h-1zM252 630h1v1h-1zM252 642h1v1h-1zM265 132h1v1h-1zM265 144h1v1h-1zM265 157h1v1h-1zM265 169h1v1h-1zM265 181h1v1h-1zM265 194h1v1h-1zM265 206h1v1h-1zM265 219h1v1h-1zM265 231h1v1h-1zM265 244h1v1h-1zM265 256h1v1h-1zM265 269h1v1h-1zM265 281h1v1h-1zM265 294h1v1h-1zM265 306h1v1h-1zM265 319h1v1h-1zM265 331h1v1h-1zM265 343h1v1h-1zM265 356h1v1h-1zM265 368h1v1h-1zM265 381h1v1h-1zM265 393h1v1h-1zM265 406h1v1h-1zM265 418h1v1h-1zM265 431h1v1h-1zM265 443h1v1h-1zM265 456h1v1h-1zM265 468h1v1h-1zM265 481h1v1h-1zM265 493h1v1h-1zM265 505h1v1h-1zM265 518h1v1h-1zM265 530h1v1h-1zM265 543h1v1h-1zM265 555h1v1h-1zM265 568h1v1h-1zM265 580h1v1h-1zM265 593h1v1h-1zM265 605h1v1h-1zM265 618h1v1h-1zM265 630h1v1h-1zM265 642h1v1h-1zM277 132h1v1h-1zM277 144h1v1h-1zM277 157h1v1h-1zM277 169h1v1h-1zM277 181h1v1h-1zM277 194h1v1h-1zM277 206h1v1h-1zM277 219h1v1h-1zM277 231h1v1h-1zM277 244h1v1h-1zM277 256h1v1h-1zM277 269h1v1h-1zM277 281h1v1h-1zM277 294h1v1h-1zM277 306h1v1h-1zM277 319h1v1h-1zM277 331h1v1h-1zM277 343h1v1h-1zM277 356h1v1h-1zM277 368h1v1h-1zM277 381h1v1h-1zM277 393h1v1h-1zM277 406h1v1h-1zM277 418h1v1h-1zM277 431h1v1h-1zM277 443h1v1h-1zM277 456h1v1h-1zM277 468h1v1h-1zM277 481h1v1h-1zM277 493h1v1h-1zM277 505h1v1h-1zM277 518h1v1h-1zM277 530h1v1h-1zM277 543h1v1h-1zM277 555h1v1h-1zM277 568h1v1h-1zM277 580h1v1h-1zM277 593h1v1h-1zM277 605h1v1h-1zM277 618h1v1h-1zM277 630h1v1h-1zM277 642h1v1h-1zM290 132h1v1h-1zM290 144h1v1h-1zM290 157h1v1h-1zM290 169h1v1h-1zM290 181h1v1h-1zM290 194h1v1h-1zM290 206h1v1h-1zM290 219h1v1h-1zM290 231h1v1h-1zM290 244h1v1h-1zM290 256h1v1h-1zM290 269h1v1h-1zM290 281h1v1h-1zM290 294h1v1h-1zM290 306h1v1h-1zM290 319h1v1h-1zM290 331h1v1h-1zM290 343h1v1h-1zM290 356h1v1h-1zM290 368h1v1h-1zM290 381h1v1h-1zM290 393h1v1h-1zM290 406h1v1h-1zM290 418h1v1h-1zM290 431h1v1h-1zM290 443h1v1h-1zM290 456h1v1h-1zM290 468h1v1h-1zM290 481h1v1h-1zM290 493h1v1h-1zM290 505h1v1h-1zM290 518h1v1h-1zM290 530h1v1h-1zM290 543h1v1h-1zM290 555h1v1h-1zM290 568h1v1h-1zM290 580h1v1h-1zM290 593h1v1h-1zM290 605h1v1h-1zM290 618h1v1h-1zM290 630h1v1h-1zM290 642h1v1h-1zM302 132h1v1h-1zM302 144h1v1h-1zM302 157h1v1h-1zM302 169h1v1h-1zM302 181h1v1h-1zM302 194h1v1h-1zM302 206h1v1h-1zM302 219h1v1h-1zM302 231h1v1h-1zM302 244h1v1h-1zM302 256h1v1h-1zM302 269h1v1h-1zM302 281h1v1h-1zM302 294h1v1h-1zM302 306h1v1h-1zM302 319h1v1h-1zM302 331h1v1h-1zM302 343h1v1h-1zM302 356h1v1h-1zM302 368h1v1h-1zM302 381h1v1h-1zM302 393h1v1h-1zM302 406h1v1h-1zM302 418h1v1h-1zM302 431h1v1h-1zM302 443h1v1h-1zM302 456h1v1h-1zM302 468h1v1h-1zM302 481h1v1h-1zM302 493h1v1h-1zM302 505h1v1h-1zM302 518h1v1h-1zM302 530h1v1h-1zM302 543h1v1h-1zM302 555h1v1h-1zM302 568h1v1h-1zM302 580h1v1h-1zM302 593h1v1h-1zM302 605h1v1h-1zM302 618h1v1h-1zM302 630h1v1h-1zM302 642h1v1h-1zM315 132h1v1h-1zM315 144h1v1h-1zM315 157h1v1h-1zM315 169h1v1h-1zM315 181h1v1h-1zM315 194h1v1h-1zM315 206h1v1h-1zM315 219h1v1h-1zM315 231h1v1h-1zM315 244h1v1h-1zM315 256h1v1h-1zM315 269h1v1h-1zM315 281h1v1h-1zM315 294h1v1h-1zM315 306h1v1h-1zM315 319h1v1h-1zM315 331h1v1h-1zM315 343h1v1h-1zM315 356h1v1h-1zM315 368h1v1h-1zM315 381h1v1h-1zM315 393h1v1h-1zM315 406h1v1h-1zM315 418h1v1h-1zM315 431h1v1h-1zM315 443h1v1h-1zM315 456h1v1h-1zM315 468h1v1h-1zM315 481h1v1h-1zM315 493h1v1h-1zM315 505h1v1h-1zM315 518h1v1h-1zM315 530h1v1h-1zM315 543h1v1h-1zM315 555h1v1h-1zM315 568h1v1h-1zM315 580h1v1h-1zM315 593h1v1h-1zM315 605h1v1h-1zM315 618h1v1h-1zM315 630h1v1h-1zM315 642h1v1h-1zM327 132h1v1h-1zM327 144h1v1h-1zM327 157h1v1h-1zM327 169h1v1h-1zM327 181h1v1h-1zM327 194h1v1h-1zM327 206h1v1h-1zM327 219h1v1h-1zM327 231h1v1h-1zM327 244h1v1h-1zM327 256h1v1h-1zM327 269h1v1h-1zM327 281h1v1h-1zM327 294h1v1h-1zM327 306h1v1h-1zM327 319h1v1h-1zM327 331h1v1h-1zM327 343h1v1h-1zM327 356h1v1h-1zM327 368h1v1h-1zM327 381h1v1h-1zM327 393h1v1h-1zM327 406h1v1h-1zM327 418h1v1h-1zM327 431h1v1h-1zM327 443h1v1h-1zM327 456h1v1h-1zM327 468h1v1h-1zM327 481h1v1h-1zM327 493h1v1h-1zM327 505h1v1h-1zM327 518h1v1h-1zM327 530h1v1h-1zM327 543h1v1h-1zM327 555h1v1h-1zM327 568h1v1h-1zM327 580h1v1h-1zM327 593h1v1h-1zM327 605h1v1h-1zM327 618h1v1h-1zM327 630h1v1h-1zM327 642h1v1h-1zM339 132h1v1h-1zM339 144h1v1h-1zM339 157h1v1h-1zM339 181h1v1h-1zM339 194h1v1h-1zM339 206h1v1h-1zM339 219h1v1h-1zM339 231h1v1h-1zM339 244h1v1h-1zM339 256h1v1h-1zM339 281h1v1h-1zM339 294h1v1h-1zM339 306h1v1h-1zM339 319h1v1h-1zM339 331h1v1h-1zM339 343h1v1h-1zM339 356h1v1h-1zM339 381h1v1h-1zM339 393h1v1h-1zM339 406h1v1h-1zM339 418h1v1h-1zM339 431h1v1h-1zM339 443h1v1h-1zM339 456h1v1h-1zM339 481h1v1h-1zM339 493h1v1h-1zM339 505h1v1h-1zM339 518h1v1h-1zM339 530h1v1h-1zM339 543h1v1h-1zM339 555h1v1h-1zM339 580h1v1h-1zM339 593h1v1h-1zM339 605h1v1h-1zM339 618h1v1h-1zM339 630h1v1h-1zM339 642h1v1h-1zM352 132h1v1h-1zM352 144h1v1h-1zM352 157h1v1h-1zM352 169h1v1h-1zM352 181h1v1h-1zM352 194h1v1h-1zM352 206h1v1h-1zM352 219h1v1h-1zM352 231h1v1h-1zM352 244h1v1h-1zM352 256h1v1h-1zM352 269h1v1h-1zM352 281h1v1h-1zM352 294h1v1h-1zM352 306h1v1h-1zM352 319h1v1h-1zM352 331h1v1h-1zM352 343h1v1h-1zM352 356h1v1h-1zM352 368h1v1h-1zM352 381h1v1h-1zM352 393h1v1h-1zM352 406h1v1h-1zM352 418h1v1h-1zM352 431h1v1h-1zM352 443h1v1h-1zM352 456h1v1h-1zM352 468h1v1h-1zM352 481h1v1h-1zM352 493h1v1h-1zM352 505h1v1h-1zM352 518h1v1h-1zM352 530h1v1h-1zM352 543h1v1h-1zM352 555h1v1h-1zM352 568h1v1h-1zM352 580h1v1h-1zM352 593h1v1h-1zM352 605h1v1h-1zM352 618h1v1h-1zM352 630h1v1h-1zM352 642h1v1h-1zM364 132h1v1h-1zM364 144h1v1h-1zM364 157h1v1h-1zM364 169h1v1h-1zM364 181h1v1h-1zM364 194h1v1h-1zM364 206h1v1h-1zM364 219h1v1h-1zM364 231h1v1h-1zM364 244h1v1h-1zM364 256h1v1h-1zM364 269h1v1h-1zM364 281h1v1h-1zM364 294h1v1h-1zM364 306h1v1h-1zM364 319h1v1h-1zM364 331h1v1h-1zM364 343h1v1h-1zM364 356h1v1h-1zM364 368h1v1h-1zM364 381h1v1h-1zM364 393h1v1h-1zM364 406h1v1h-1zM364 418h1v1h-1zM364 431h1v1h-1zM364 443h1v1h-1zM364 456h1v1h-1zM364 468h1v1h-1zM364 481h1v1h-1zM364 493h1v1h-1zM364 505h1v1h-1zM364 518h1v1h-1zM364 530h1v1h-1zM364 543h1v1h-1zM364 555h1v1h-1zM364 568h1v1h-1zM364 580h1v1h-1zM364 593h1v1h-1zM364 605h1v1h-1zM364 618h1v1h-1zM364 630h1v1h-1zM364 642h1v1h-1zM377 132h1v1h-1zM377 144h1v1h-1zM377 157h1v1h-1zM377 169h1v1h-1zM377 181h1v1h-1zM377 194h1v1h-1zM377 206h1v1h-1zM377 219h1v1h-1zM377 231h1v1h-1zM377 244h1v1h-1zM377 256h1v1h-1zM377 269h1v1h-1zM377 281h1v1h-1zM377 294h1v1h-1zM377 306h1v1h-1zM377 319h1v1h-1zM377 331h1v1h-1zM377 343h1v1h-1zM377 356h1v1h-1zM377 368h1v1h-1zM377 381h1v1h-1zM377 393h1v1h-1zM377 406h1v1h-1zM377 418h1v1h-1zM377 431h1v1h-1zM377 443h1v1h-1zM377 456h1v1h-1zM377 468h1v1h-1zM377 481h1v1h-1zM377 493h1v1h-1zM377 505h1v1h-1zM377 518h1v1h-1zM377 530h1v1h-1zM377 543h1v1h-1zM377 555h1v1h-1zM377 568h1v1h-1zM377 580h1v1h-1zM377 593h1v1h-1zM377 605h1v1h-1zM377 618h1v1h-1zM377 630h1v1h-1zM377 642h1v1h-1zM389 132h1v1h-1zM389 144h1v1h-1zM389 157h1v1h-1zM389 169h1v1h-1zM389 181h1v1h-1zM389 194h1v1h-1zM389 206h1v1h-1zM389 219h1v1h-1zM389 231h1v1h-1zM389 244h1v1h-1zM389 256h1v1h-1zM389 269h1v1h-1zM389 281h1v1h-1zM389 294h1v1h-1zM389 306h1v1h-1zM389 319h1v1h-1zM389 331h1v1h-1zM389 343h1v1h-1zM389 356h1v1h-1zM389 368h1v1h-1zM389 381h1v1h-1zM389 393h1v1h-1zM389 406h1v1h-1zM389 418h1v1h-1zM389 431h1v1h-1zM389 443h1v1h-1zM389 456h1v1h-1zM389 468h1v1h-1zM389 481h1v1h-1zM389 493h1v1h-1zM389 505h1v1h-1zM389 518h1v1h-1zM389 530h1v1h-1zM389 543h1v1h-1zM389 555h1v1h-1zM389 568h1v1h-1zM389 580h1v1h-1zM389 593h1v1h-1zM389 605h1v1h-1zM389 618h1v1h-1zM389 630h1v1h-1zM389 642h1v1h-1zM402 132h1v1h-1zM402 144h1v1h-1zM402 157h1v1h-1zM402 169h1v1h-1zM402 181h1v1h-1zM402 194h1v1h-1zM402 206h1v1h-1zM402 219h1v1h-1zM402 231h1v1h-1zM402 244h1v1h-1zM402 256h1v1h-1zM402 269h1v1h-1zM402 281h1v1h-1zM402 294h1v1h-1zM402 306h1v1h-1zM402 319h1v1h-1zM402 331h1v1h-1zM402 343h1v1h-1zM402 356h1v1h-1zM402 368h1v1h-1zM402 381h1v1h-1zM402 393h1v1h-1zM402 406h1v1h-1zM402 418h1v1h-1zM402 431h1v1h-1zM402 443h1v1h-1zM402 456h1v1h-1zM402 468h1v1h-1zM402 481h1v1h-1zM402 493h1v1h-1zM402 505h1v1h-1zM402 518h1v1h-1zM402 530h1v1h-1zM402 543h1v1h-1zM402 555h1v1h-1zM402 568h1v1h-1zM402 580h1v1h-1zM402 593h1v1h-1zM402 605h1v1h-1zM402 618h1v1h-1zM402 630h1v1h-1zM402 642h1v1h-1zM414 132h1v1h-1zM414 144h1v1h-1zM414 157h1v1h-1zM414 169h1v1h-1zM414 181h1v1h-1zM414 194h1v1h-1zM414 206h1v1h-1zM414 219h1v1h-1zM414 231h1v1h-1zM414 244h1v1h-1zM414 256h1v1h-1zM414 269h1v1h-1zM414 281h1v1h-1zM414 294h1v1h-1zM414 306h1v1h-1zM414 319h1v1h-1zM414 331h1v1h-1zM414 343h1v1h-1zM414 356h1v1h-1zM414 368h1v1h-1zM414 381h1v1h-1zM414 393h1v1h-1zM414 406h1v1h-1zM414 418h1v1h-1zM414 431h1v1h-1zM414 443h1v1h-1zM414 456h1v1h-1zM414 468h1v1h-1zM414 481h1v1h-1zM414 493h1v1h-1zM414 505h1v1h-1zM414 518h1v1h-1zM414 530h1v1h-1zM414 543h1v1h-1zM414 555h1v1h-1zM414 568h1v1h-1zM414 580h1v1h-1zM414 593h1v1h-1zM414 605h1v1h-1zM414 618h1v1h-1zM414 630h1v1h-1zM414 642h1v1h-1zM427 132h1v1h-1zM427 144h1v1h-1zM427 157h1v1h-1zM427 169h1v1h-1zM427 181h1v1h-1zM427 194h1v1h-1zM427 206h1v1h-1zM427 219h1v1h-1zM427 231h1v1h-1zM427 244h1v1h-1zM427 256h1v1h-1zM427 269h1v1h-1zM427 281h1v1h-1zM427 294h1v1h-1zM427 306h1v1h-1zM427 319h1v1h-1zM427 331h1v1h-1zM427 343h1v1h-1zM427 356h1v1h-1zM427 368h1v1h-1zM427 381h1v1h-1zM427 393h1v1h-1zM427 406h1v1h-1zM427 418h1v1h-1zM427 431h1v1h-1zM427 443h1v1h-1zM427 456h1v1h-1zM427 468h1v1h-1zM427 481h1v1h-1zM427 493h1v1h-1zM427 505h1v1h-1zM427 518h1v1h-1zM427 530h1v1h-1zM427 543h1v1h-1zM427 555h1v1h-1zM427 568h1v1h-1zM427 580h1v1h-1zM427 593h1v1h-1zM427 605h1v1h-1zM427 618h1v1h-1zM427 630h1v1h-1zM427 642h1v1h-1zM439 132h1v1h-1zM439 144h1v1h-1zM439 157h1v1h-1zM439 181h1v1h-1zM439 194h1v1h-1zM439 206h1v1h-1zM439 219h1v1h-1zM439 231h1v1h-1zM439 244h1v1h-1zM439 256h1v1h-1zM439 281h1v1h-1zM439 294h1v1h-1zM439 306h1v1h-1zM439 319h1v1h-1zM439 331h1v1h-1zM439 343h1v1h-1zM439 356h1v1h-1zM439 381h1v1h-1zM439 393h1v1h-1zM439 406h1v1h-1zM439 418h1v1h-1zM439 431h1v1h-1zM439 443h1v1h-1zM439 456h1v1h-1zM439 481h1v1h-1zM439 493h1v1h-1zM439 505h1v1h-1zM439 518h1v1h-1zM439 530h1v1h-1zM439 543h1v1h-1zM439 555h1v1h-1zM439 580h1v1h-1zM439 593h1v1h-1zM439 605h1v1h-1zM439 618h1v1h-1zM439 630h1v1h-1zM439 642h1v1h-1zM452 132h1v1h-1zM452 144h1v1h-1zM452 157h1v1h-1zM452 169h1v1h-1zM452 181h1v1h-1zM452 194h1v1h-1zM452 206h1v1h-1zM452 219h1v1h-1zM452 231h1v1h-1zM452 244h1v1h-1zM452 256h1v1h-1zM452 269h1v1h-1zM452 281h1v1h-1zM452 294h1v1h-1zM452 306h1v1h-1zM452 319h1v1h-1zM452 331h1v1h-1zM452 343h1v1h-1zM452 356h1v1h-1zM452 368h1v1h-1zM452 381h1v1h-1zM452 393h1v1h-1zM452 406h1v1h-1zM452 418h1v1h-1zM452 431h1v1h-1zM452 443h1v1h-1zM452 456h1v1h-1zM452 468h1v1h-1zM452 481h1v1h-1zM452 493h1v1h-1zM452 505h1v1h-1zM452 518h1v1h-1zM452 530h1v1h-1zM452 543h1v1h-1zM452 555h1v1h-1zM452 568h1v1h-1zM452 580h1v1h-1zM452 593h1v1h-1zM452 605h1v1h-1zM452 618h1v1h-1zM452 630h1v1h-1zM452 642h1v1h-1zM464 132h1v1h-1zM464 144h1v1h-1zM464 157h1v1h-1zM464 169h1v1h-1zM464 181h1v1h-1zM464 194h1v1h-1zM464 206h1v1h-1zM464 219h1v1h-1zM464 231h1v1h-1zM464 244h1v1h-1zM464 256h1v1h-1zM464 269h1v1h-1zM464 281h1v1h-1zM464 294h1v1h-1zM464 306h1v1h-1zM464 319h1v1h-1zM464 331h1v1h-1zM464 343h1v1h-1zM464 356h1v1h-1zM464 368h1v1h-1zM464 381h1v1h-1zM464 393h1v1h-1zM464 406h1v1h-1zM464 418h1v1h-1zM464 431h1v1h-1zM464 443h1v1h-1zM464 456h1v1h-1zM464 468h1v1h-1zM464 481h1v1h-1zM464 493h1v1h-1zM464 505h1v1h-1zM464 518h1v1h-1zM464 530h1v1h-1zM464 543h1v1h-1zM464 555h1v1h-1zM464 568h1v1h-1zM464 580h1v1h-1zM464 593h1v1h-1zM464 605h1v1h-1zM464 618h1v1h-1zM464 630h1v1h-1zM464 642h1v1h-1zM476 132h1v1h-1zM476 144h1v1h-1zM476 157h1v1h-1zM476 169h1v1h-1zM476 181h1v1h-1zM476 194h1v1h-1zM476 206h1v1h-1zM476 219h1v1h-1zM476 231h1v1h-1zM476 244h1v1h-1zM476 256h1v1h-1zM476 269h1v1h-1zM476 281h1v1h-1zM476 294h1v1h-1zM476 306h1v1h-1zM476 319h1v1h-1zM476 331h1v1h-1zM476 343h1v1h-1zM476 356h1v1h-1zM476 368h1v1h-1zM476 381h1v1h-1zM476 393h1v1h-1zM476 406h1v1h-1zM476 418h1v1h-1zM476 431h1v1h-1zM476 443h1v1h-1zM476 456h1v1h-1zM476 468h1v1h-1zM476 481h1v1h-1zM476 493h1v1h-1zM476 505h1v1h-1zM476 518h1v1h-1zM476 530h1v1h-1zM476 543h1v1h-1zM476 555h1v1h-1zM476 568h1v1h-1zM476 580h1v1h-1zM476 593h1v1h-1zM476 605h1v1h-1zM476 618h1v1h-1zM476 630h1v1h-1zM476 642h1v1h-1zM489 132h1v1h-1zM489 144h1v1h-1zM489 157h1v1h-1zM489 169h1v1h-1zM489 181h1v1h-1zM489 194h1v1h-1zM489 206h1v1h-1zM489 219h1v1h-1zM489 231h1v1h-1zM489 244h1v1h-1zM489 256h1v1h-1zM489 269h1v1h-1zM489 281h1v1h-1zM489 294h1v1h-1zM489 306h1v1h-1zM489 319h1v1h-1zM489 331h1v1h-1zM489 343h1v1h-1zM489 356h1v1h-1zM489 368h1v1h-1zM489 381h1v1h-1zM489 393h1v1h-1zM489 406h1v1h-1zM489 418h1v1h-1zM489 431h1v1h-1zM489 443h1v1h-1zM489 456h1v1h-1zM489 468h1v1h-1zM489 481h1v1h-1zM489 493h1v1h-1zM489 505h1v1h-1zM489 518h1v1h-1zM489 530h1v1h-1zM489 543h1v1h-1zM489 555h1v1h-1zM489 568h1v1h-1zM489 580h1v1h-1zM489 593h1v1h-1zM489 605h1v1h-1zM489 618h1v1h-1zM489 630h1v1h-1zM489 642h1v1h-1zM501 132h1v1h-1zM501 144h1v1h-1zM501 157h1v1h-1zM501 169h1v1h-1zM501 181h1v1h-1zM501 194h1v1h-1zM501 206h1v1h-1zM501 219h1v1h-1zM501 231h1v1h-1zM501 244h1v1h-1zM501 256h1v1h-1zM501 269h1v1h-1zM501 281h1v1h-1zM501 294h1v1h-1zM501 306h1v1h-1zM501 319h1v1h-1zM501 331h1v1h-1zM501 343h1v1h-1zM501 356h1v1h-1zM501 368h1v1h-1zM501 381h1v1h-1zM501 393h1v1h-1zM501 406h1v1h-1zM501 418h1v1h-1zM501 431h1v1h-1zM501 443h1v1h-1zM501 456h1v1h-1zM501 468h1v1h-1zM501 481h1v1h-1zM501 493h1v1h-1zM501 505h1v1h-1zM501 518h1v1h-1zM501 530h1v1h-1zM501 543h1v1h-1zM501 555h1v1h-1zM501 568h1v1h-1zM501 580h1v1h-1zM501 593h1v1h-1zM501 605h1v1h-1zM501 618h1v1h-1zM501 630h1v1h-1zM501 642h1v1h-1zM514 132h1v1h-1zM514 144h1v1h-1zM514 157h1v1h-1zM514 169h1v1h-1zM514 181h1v1h-1zM514 194h1v1h-1zM514 206h1v1h-1zM514 219h1v1h-1zM514 231h1v1h-1zM514 244h1v1h-1zM514 256h1v1h-1zM514 269h1v1h-1zM514 281h1v1h-1zM514 294h1v1h-1zM514 306h1v1h-1zM514 319h1v1h-1zM514 331h1v1h-1zM514 343h1v1h-1zM514 356h1v1h-1zM514 368h1v1h-1zM514 381h1v1h-1zM514 393h1v1h-1zM514 406h1v1h-1zM514 418h1v1h-1zM514 431h1v1h-1zM514 443h1v1h-1zM514 456h1v1h-1zM514 468h1v1h-1zM514 481h1v1h-1zM514 493h1v1h-1zM514 505h1v1h-1zM514 518h1v1h-1zM514 530h1v1h-1zM514 543h1v1h-1zM514 555h1v1h-1zM514 568h1v1h-1zM514 580h1v1h-1zM514 593h1v1h-1zM514 605h1v1h-1zM514 618h1v1h-1zM514 630h1v1h-1zM514 642h1v1h-1zM526 132h1v1h-1zM526 144h1v1h-1zM526 157h1v1h-1zM526 169h1v1h-1zM526 181h1v1h-1zM526 194h1v1h-1zM526 206h1v1h-1zM526 219h1v1h-1zM526 231h1v1h-1zM526 244h1v1h-1zM526 256h1v1h-1zM526 269h1v1h-1zM526 281h1v1h-1zM526 294h1v1h-1zM526 306h1v1h-1zM526 319h1v1h-1zM526 331h1v1h-1zM526 343h1v1h-1zM526 356h1v1h-1zM526 368h1v1h-1zM526 381h1v1h-1zM526 393h1v1h-1zM526 406h1v1h-1zM526 418h1v1h-1zM526 431h1v1h-1zM526 443h1v1h-1zM526 456h1v1h-1zM526 468h1v1h-1zM526 481h1v1h-1zM526 493h1v1h-1zM526 505h1v1h-1zM526 518h1v1h-1zM526 530h1v1h-1zM526 543h1v1h-1zM526 555h1v1h-1zM526 568h1v1h-1zM526 580h1v1h-1zM526 593h1v1h-1zM526 605h1v1h-1zM526 618h1v1h-1zM526 630h1v1h-1zM526 642h1v1h-1zM539 132h1v1h-1zM539 144h1v1h-1zM539 157h1v1h-1zM539 181h1v1h-1zM539 194h1v1h-1zM539 206h1v1h-1zM539 219h1v1h-1zM539 231h1v1h-1zM539 244h1v1h-1zM539 256h1v1h-1zM539 281h1v1h-1zM539 294h1v1h-1zM539 306h1v1h-1zM539 319h1v1h-1zM539 331h1v1h-1zM539 343h1v1h-1zM539 356h1v1h-1zM539 381h1v1h-1zM539 393h1v1h-1zM539 406h1v1h-1zM539 418h1v1h-1zM539 431h1v1h-1zM539 443h1v1h-1zM539 456h1v1h-1zM539 481h1v1h-1zM539 493h1v1h-1zM539 505h1v1h-1zM539 518h1v1h-1zM539 530h1v1h-1zM539 543h1v1h-1zM539 555h1v1h-1zM539 580h1v1h-1zM539 593h1v1h-1zM539 605h1v1h-1zM539 618h1v1h-1zM539 630h1v1h-1zM539 642h1v1h-1zM551 132h1v1h-1zM551 144h1v1h-1zM551 157h1v1h-1zM551 169h1v1h-1zM551 181h1v1h-1zM551 194h1v1h-1zM551 206h1v1h-1zM551 219h1v1h-1zM551 231h1v1h-1zM551 244h1v1h-1zM551 256h1v1h-1zM551 269h1v1h-1zM551 281h1v1h-1zM551 294h1v1h-1zM551 306h1v1h-1zM551 319h1v1h-1zM551 331h1v1h-1zM551 343h1v1h-1zM551 356h1v1h-1zM551 368h1v1h-1zM551 381h1v1h-1zM551 393h1v1h-1zM551 406h1v1h-1zM551 418h1v1h-1zM551 431h1v1h-1zM551 443h1v1h-1zM551 456h1v1h-1zM551 468h1v1h-1zM551 481h1v1h-1zM551 493h1v1h-1zM551 505h1v1h-1zM551 518h1v1h-1zM551 530h1v1h-1zM551 543h1v1h-1zM551 555h1v1h-1zM551 568h1v1h-1zM551 580h1v1h-1zM551 593h1v1h-1zM551 605h1v1h-1zM551 618h1v1h-1zM551 630h1v1h-1zM551 642h1v1h-1zM564 132h1v1h-1zM564 144h1v1h-1zM564 157h1v1h-1zM564 169h1v1h-1zM564 181h1v1h-1zM564 194h1v1h-1zM564 206h1v1h-1zM564 219h1v1h-1zM564 231h1v1h-1zM564 244h1v1h-1zM564 256h1v1h-1zM564 269h1v1h-1zM564 281h1v1h-1zM564 294h1v1h-1zM564 306h1v1h-1zM564 319h1v1h-1zM564 331h1v1h-1zM564 343h1v1h-1zM564 356h1v1h-1zM564 368h1v1h-1zM564 381h1v1h-1zM564 393h1v1h-1zM564 406h1v1h-1zM564 418h1v1h-1zM564 431h1v1h-1zM564 443h1v1h-1zM564 456h1v1h-1zM564 468h1v1h-1zM564 481h1v1h-1zM564 493h1v1h-1zM564 505h1v1h-1zM564 518h1v1h-1zM564 530h1v1h-1zM564 543h1v1h-1zM564 555h1v1h-1zM564 568h1v1h-1zM564 580h1v1h-1zM564 593h1v1h-1zM564 605h1v1h-1zM564 618h1v1h-1zM564 630h1v1h-1zM564 642h1v1h-1zM576 132h1v1h-1zM576 144h1v1h-1zM576 157h1v1h-1zM576 169h1v1h-1zM576 181h1v1h-1zM576 194h1v1h-1zM576 206h1v1h-1zM576 219h1v1h-1zM576 231h1v1h-1zM576 244h1v1h-1zM576 256h1v1h-1zM576 269h1v1h-1zM576 281h1v1h-1zM576 294h1v1h-1zM576 306h1v1h-1zM576 319h1v1h-1zM576 331h1v1h-1zM576 343h1v1h-1zM576 356h1v1h-1zM576 368h1v1h-1zM576 381h1v1h-1zM576 393h1v1h-1zM576 406h1v1h-1zM576 418h1v1h-1zM576 431h1v1h-1zM576 443h1v1h-1zM576 456h1v1h-1zM576 468h1v1h-1zM576 481h1v1h-1zM576 493h1v1h-1zM576 505h1v1h-1zM576 518h1v1h-1zM576 530h1v1h-1zM576 543h1v1h-1zM576 555h1v1h-1zM576 568h1v1h-1zM576 580h1v1h-1zM576 593h1v1h-1zM576 605h1v1h-1zM576 618h1v1h-1zM576 630h1v1h-1zM576 642h1v1h-1zM589 132h1v1h-1zM589 144h1v1h-1zM589 157h1v1h-1zM589 169h1v1h-1zM589 181h1v1h-1zM589 194h1v1h-1zM589 206h1v1h-1zM589 219h1v1h-1zM589 231h1v1h-1zM589 244h1v1h-1zM589 256h1v1h-1zM589 269h1v1h-1zM589 281h1v1h-1zM589 294h1v1h-1zM589 306h1v1h-1zM589 319h1v1h-1zM589 331h1v1h-1zM589 343h1v1h-1zM589 356h1v1h-1zM589 368h1v1h-1zM589 381h1v1h-1zM589 393h1v1h-1zM589 406h1v1h-1zM589 418h1v1h-1zM589 431h1v1h-1zM589 443h1v1h-1zM589 456h1v1h-1zM589 468h1v1h-1zM589 481h1v1h-1zM589 493h1v1h-1zM589 505h1v1h-1zM589 518h1v1h-1zM589 530h1v1h-1zM589 543h1v1h-1zM589 555h1v1h-1zM589 568h1v1h-1zM589 580h1v1h-1zM589 593h1v1h-1zM589 605h1v1h-1zM589 618h1v1h-1zM589 630h1v1h-1zM589 642h1v1h-1zM601 132h1v1h-1zM601 144h1v1h-1zM601 157h1v1h-1zM601 169h1v1h-1zM601 181h1v1h-1zM601 194h1v1h-1zM601 206h1v1h-1zM601 219h1v1h-1zM601 231h1v1h-1zM601 244h1v1h-1zM601 256h1v1h-1zM601 269h1v1h-1zM601 281h1v1h-1zM601 294h1v1h-1zM601 306h1v1h-1zM601 319h1v1h-1zM601 331h1v1h-1zM601 343h1v1h-1zM601 356h1v1h-1zM601 368h1v1h-1zM601 381h1v1h-1zM601 393h1v1h-1zM601 406h1v1h-1zM601 418h1v1h-1zM601 431h1v1h-1zM601 443h1v1h-1zM601 456h1v1h-1zM601 468h1v1h-1zM601 481h1v1h-1zM601 493h1v1h-1zM601 505h1v1h-1zM601 518h1v1h-1zM601 530h1v1h-1zM601 543h1v1h-1zM601 555h1v1h-1zM601 568h1v1h-1zM601 580h1v1h-1zM601 593h1v1h-1zM601 605h1v1h-1zM601 618h1v1h-1zM601 630h1v1h-1zM601 642h1v1h-1zM613 132h1v1h-1zM613 144h1v1h-1zM613 157h1v1h-1zM613 169h1v1h-1zM613 181h1v1h-1zM613 194h1v1h-1zM613 206h1v1h-1zM613 219h1v1h-1zM613 231h1v1h-1zM613 244h1v1h-1zM613 256h1v1h-1zM613 269h1v1h-1zM613 281h1v1h-1zM613 294h1v1h-1zM613 306h1v1h-1zM613 319h1v1h-1zM613 331h1v1h-1zM613 343h1v1h-1zM613 356h1v1h-1zM613 368h1v1h-1zM613 381h1v1h-1zM613 393h1v1h-1zM613 406h1v1h-1zM613 418h1v1h-1zM613 431h1v1h-1zM613 443h1v1h-1zM613 456h1v1h-1zM613 468h1v1h-1zM613 481h1v1h-1zM613 493h1v1h-1zM613 505h1v1h-1zM613 518h1v1h-1zM613 530h1v1h-1zM613 543h1v1h-1zM613 555h1v1h-1zM613 568h1v1h-1zM613 580h1v1h-1zM613 593h1v1h-1zM613 605h1v1h-1zM613 618h1v1h-1zM613 630h1v1h-1zM613 642h1v1h-1zM626 132h1v1h-1zM626 144h1v1h-1zM626 157h1v1h-1zM626 169h1v1h-1zM626 181h1v1h-1zM626 194h1v1h-1zM626 206h1v1h-1zM626 219h1v1h-1zM626 231h1v1h-1zM626 244h1v1h-1zM626 256h1v1h-1zM626 269h1v1h-1zM626 281h1v1h-1zM626 294h1v1h-1zM626 306h1v1h-1zM626 319h1v1h-1zM626 331h1v1h-1zM626 343h1v1h-1zM626 356h1v1h-1zM626 368h1v1h-1zM626 381h1v1h-1zM626 393h1v1h-1zM626 406h1v1h-1zM626 418h1v1h-1zM626 431h1v1h-1zM626 443h1v1h-1zM626 456h1v1h-1zM626 468h1v1h-1zM626 481h1v1h-1zM626 493h1v1h-1zM626 505h1v1h-1zM626 518h1v1h-1zM626 530h1v1h-1zM626 543h1v1h-1zM626 555h1v1h-1zM626 568h1v1h-1zM626 580h1v1h-1zM626 593h1v1h-1zM626 605h1v1h-1zM626 618h1v1h-1zM626 630h1v1h-1zM626 642h1v1h-1zM638 132h1v1h-1zM638 144h1v1h-1zM638 157h1v1h-1zM638 181h1v1h-1zM638 194h1v1h-1zM638 206h1v1h-1zM638 219h1v1h-1zM638 231h1v1h-1zM638 244h1v1h-1zM638 256h1v1h-1zM638 281h1v1h-1zM638 294h1v1h-1zM638 306h1v1h-1zM638 319h1v1h-1zM638 331h1v1h-1zM638 343h1v1h-1zM638 356h1v1h-1zM638 381h1v1h-1zM638 393h1v1h-1zM638 406h1v1h-1zM638 418h1v1h-1zM638 431h1v1h-1zM638 443h1v1h-1zM638 456h1v1h-1zM638 481h1v1h-1zM638 493h1v1h-1zM638 505h1v1h-1zM638 518h1v1h-1zM638 530h1v1h-1zM638 543h1v1h-1zM638 555h1v1h-1zM638 580h1v1h-1zM638 593h1v1h-1zM638 605h1v1h-1zM638 618h1v1h-1zM638 630h1v1h-1zM638 642h1v1h-1zM651 132h1v1h-1zM651 144h1v1h-1zM651 157h1v1h-1zM651 169h1v1h-1zM651 181h1v1h-1zM651 194h1v1h-1zM651 206h1v1h-1zM651 219h1v1h-1zM651 231h1v1h-1zM651 244h1v1h-1zM651 256h1v1h-1zM651 269h1v1h-1zM651 281h1v1h-1zM651 294h1v1h-1zM651 306h1v1h-1zM651 319h1v1h-1zM651 331h1v1h-1zM651 343h1v1h-1zM651 356h1v1h-1zM651 368h1v1h-1zM651 381h1v1h-1zM651 393h1v1h-1zM651 406h1v1h-1zM651 418h1v1h-1zM651 431h1v1h-1zM651 443h1v1h-1zM651 456h1v1h-1zM651 468h1v1h-1zM651 481h1v1h-1zM651 493h1v1h-1zM651 505h1v1h-1zM651 518h1v1h-1zM651 530h1v1h-1zM651 543h1v1h-1zM651 555h1v1h-1zM651 568h1v1h-1zM651 580h1v1h-1zM651 593h1v1h-1zM651 605h1v1h-1zM651 618h1v1h-1zM651 630h1v1h-1zM651 642h1v1h-1zM663 132h1v1h-1zM663 144h1v1h-1zM663 157h1v1h-1zM663 169h1v1h-1zM663 181h1v1h-1zM663 194h1v1h-1zM663 206h1v1h-1zM663 219h1v1h-1zM663 231h1v1h-1zM663 244h1v1h-1zM663 256h1v1h-1zM663 269h1v1h-1zM663 281h1v1h-1zM663 294h1v1h-1zM663 306h1v1h-1zM663 319h1v1h-1zM663 331h1v1h-1zM663 343h1v1h-1zM663 356h1v1h-1zM663 368h1v1h-1zM663 381h1v1h-1zM663 393h1v1h-1zM663 406h1v1h-1zM663 418h1v1h-1zM663 431h1v1h-1zM663 443h1v1h-1zM663 456h1v1h-1zM663 468h1v1h-1zM663 481h1v1h-1zM663 493h1v1h-1zM663 505h1v1h-1zM663 518h1v1h-1zM663 530h1v1h-1zM663 543h1v1h-1zM663 555h1v1h-1zM663 568h1v1h-1zM663 580h1v1h-1zM663 593h1v1h-1zM663 605h1v1h-1zM663 618h1v1h-1zM663 630h1v1h-1zM663 642h1v1h-1zM676 132h1v1h-1zM676 144h1v1h-1zM676 157h1v1h-1zM676 169h1v1h-1zM676 181h1v1h-1zM676 194h1v1h-1zM676 206h1v1h-1zM676 219h1v1h-1zM676 231h1v1h-1zM676 244h1v1h-1zM676 256h1v1h-1zM676 269h1v1h-1zM676 281h1v1h-1zM676 294h1v1h-1zM676 306h1v1h-1zM676 319h1v1h-1zM676 331h1v1h-1zM676 343h1v1h-1zM676 356h1v1h-1zM676 368h1v1h-1zM676 381h1v1h-1zM676 393h1v1h-1zM676 406h1v1h-1zM676 418h1v1h-1zM676 431h1v1h-1zM676 443h1v1h-1zM676 456h1v1h-1zM676 468h1v1h-1zM676 481h1v1h-1zM676 493h1v1h-1zM676 505h1v1h-1zM676 518h1v1h-1zM676 530h1v1h-1zM676 543h1v1h-1zM676 555h1v1h-1zM676 568h1v1h-1zM676 580h1v1h-1zM676 593h1v1h-1zM676 605h1v1h-1zM676 618h1v1h-1zM676 630h1v1h-1zM676 642h1v1h-1zM688 132h1v1h-1zM688 144h1v1h-1zM688 157h1v1h-1zM688 169h1v1h-1zM688 181h1v1h-1zM688 194h1v1h-1zM688 206h1v1h-1zM688 219h1v1h-1zM688 231h1v1h-1zM688 244h1v1h-1zM688 256h1v1h-1zM688 269h1v1h-1zM688 281h1v1h-1zM688 294h1v1h-1zM688 306h1v1h-1zM688 319h1v1h-1zM688 331h1v1h-1zM688 343h1v1h-1zM688 356h1v1h-1zM688 368h1v1h-1zM688 381h1v1h-1zM688 393h1v1h-1zM688 406h1v1h-1zM688 418h1v1h-1zM688 431h1v1h-1zM688 443h1v1h-1zM688 456h1v1h-1zM688 468h1v1h-1zM688 481h1v1h-1zM688 493h1v1h-1zM688 505h1v1h-1zM688 518h1v1h-1zM688 530h1v1h-1zM688 543h1v1h-1zM688 555h1v1h-1zM688 568h1v1h-1zM688 580h1v1h-1zM688 593h1v1h-1zM688 605h1v1h-1zM688 618h1v1h-1zM688 630h1v1h-1zM688 642h1v1h-1zM701 132h1v1h-1zM701 144h1v1h-1zM701 157h1v1h-1zM701 169h1v1h-1zM701 181h1v1h-1zM701 194h1v1h-1zM701 206h1v1h-1zM701 219h1v1h-1zM701 231h1v1h-1zM701 244h1v1h-1zM701 256h1v1h-1zM701 269h1v1h-1zM701 281h1v1h-1zM701 294h1v1h-1zM701 306h1v1h-1zM701 319h1v1h-1zM701 331h1v1h-1zM701 343h1v1h-1zM701 356h1v1h-1zM701 368h1v1h-1zM701 381h1v1h-1zM701 393h1v1h-1zM701 406h1v1h-1zM701 418h1v1h-1zM701 431h1v1h-1zM701 443h1v1h-1zM701 456h1v1h-1zM701 468h1v1h-1zM701 481h1v1h-1zM701 493h1v1h-1zM701 505h1v1h-1zM701 518h1v1h-1zM701 530h1v1h-1zM701 543h1v1h-1zM701 555h1v1h-1zM701 568h1v1h-1zM701 580h1v1h-1zM701 593h1v1h-1zM701 605h1v1h-1zM701 618h1v1h-1zM701 630h1v1h-1zM701 642h1v1h-1zM713 132h1v1h-1zM713 144h1v1h-1zM713 157h1v1h-1zM713 169h1v1h-1zM713 181h1v1h-1zM713 194h1v1h-1zM713 206h1v1h-1zM713 219h1v1h-1zM713 231h1v1h-1zM713 244h1v1h-1zM713 256h1v1h-1zM713 269h1v1h-1zM713 281h1v1h-1zM713 294h1v1h-1zM713 306h1v1h-1zM713 319h1v1h-1zM713 331h1v1h-1zM713 343h1v1h-1zM713 356h1v1h-1zM713 368h1v1h-1zM713 381h1v1h-1zM713 393h1v1h-1zM713 406h1v1h-1zM713 418h1v1h-1zM713 431h1v1h-1zM713 443h1v1h-1zM713 456h1v1h-1zM713 468h1v1h-1zM713 481h1v1h-1zM713 493h1v1h-1zM713 505h1v1h-1zM713 518h1v1h-1zM713 530h1v1h-1zM713 543h1v1h-1zM713 555h1v1h-1zM713 568h1v1h-1zM713 580h1v1h-1zM713 593h1v1h-1zM713 605h1v1h-1zM713 618h1v1h-1zM713 630h1v1h-1zM713 642h1v1h-1zM726 132h1v1h-1zM726 144h1v1h-1zM726 157h1v1h-1zM726 169h1v1h-1zM726 181h1v1h-1zM726 194h1v1h-1zM726 206h1v1h-1zM726 219h1v1h-1zM726 231h1v1h-1zM726 244h1v1h-1zM726 256h1v1h-1zM726 269h1v1h-1zM726 281h1v1h-1zM726 294h1v1h-1zM726 306h1v1h-1zM726 319h1v1h-1zM726 331h1v1h-1zM726 343h1v1h-1zM726 356h1v1h-1zM726 368h1v1h-1zM726 381h1v1h-1zM726 393h1v1h-1zM726 406h1v1h-1zM726 418h1v1h-1zM726 431h1v1h-1zM726 443h1v1h-1zM726 456h1v1h-1zM726 468h1v1h-1zM726 481h1v1h-1zM726 493h1v1h-1zM726 505h1v1h-1zM726 518h1v1h-1zM726 530h1v1h-1zM726 543h1v1h-1zM726 555h1v1h-1zM726 568h1v1h-1zM726 580h1v1h-1zM726 593h1v1h-1zM726 605h1v1h-1zM726 618h1v1h-1zM726 630h1v1h-1zM726 642h1v1h-1zM738 132h1v1h-1zM738 144h1v1h-1zM738 157h1v1h-1zM738 181h1v1h-1zM738 194h1v1h-1zM738 206h1v1h-1zM738 219h1v1h-1zM738 231h1v1h-1zM738 244h1v1h-1zM738 256h1v1h-1zM738 281h1v1h-1zM738 294h1v1h-1zM738 306h1v1h-1zM738 319h1v1h-1zM738 331h1v1h-1zM738 343h1v1h-1zM738 356h1v1h-1zM738 381h1v1h-1zM738 393h1v1h-1zM738 406h1v1h-1zM738 418h1v1h-1zM738 431h1v1h-1zM738 443h1v1h-1zM738 456h1v1h-1zM738 481h1v1h-1zM738 493h1v1h-1zM738 505h1v1h-1zM738 518h1v1h-1zM738 530h1v1h-1zM738 543h1v1h-1zM738 555h1v1h-1zM738 580h1v1h-1zM738 593h1v1h-1zM738 605h1v1h-1zM738 618h1v1h-1zM738 630h1v1h-1zM738 642h1v1h-1zM750 132h1v1h-1zM750 144h1v1h-1zM750 157h1v1h-1zM750 169h1v1h-1zM750 181h1v1h-1zM750 194h1v1h-1zM750 206h1v1h-1zM750 219h1v1h-1zM750 231h1v1h-1zM750 244h1v1h-1zM750 256h1v1h-1zM750 269h1v1h-1zM750 281h1v1h-1zM750 294h1v1h-1zM750 306h1v1h-1zM750 319h1v1h-1zM750 331h1v1h-1zM750 343h1v1h-1zM750 356h1v1h-1zM750 368h1v1h-1zM750 381h1v1h-1zM750 393h1v1h-1zM750 406h1v1h-1zM750 418h1v1h-1zM750 431h1v1h-1zM750 443h1v1h-1zM750 456h1v1h-1zM750 468h1v1h-1zM750 481h1v1h-1zM750 493h1v1h-1zM750 505h1v1h-1zM750 518h1v1h-1zM750 530h1v1h-1zM750 543h1v1h-1zM750 555h1v1h-1zM750 568h1v1h-1zM750 580h1v1h-1zM750 593h1v1h-1zM750 605h1v1h-1zM750 618h1v1h-1zM750 630h1v1h-1zM750 642h1v1h-1zM763 132h1v1h-1zM763 144h1v1h-1zM763 157h1v1h-1zM763 169h1v1h-1zM763 181h1v1h-1zM763 194h1v1h-1zM763 206h1v1h-1zM763 219h1v1h-1zM763 231h1v1h-1zM763 244h1v1h-1zM763 256h1v1h-1zM763 269h1v1h-1zM763 281h1v1h-1zM763 294h1v1h-1zM763 306h1v1h-1zM763 319h1v1h-1zM763 331h1v1h-1zM763 343h1v1h-1zM763 356h1v1h-1zM763 368h1v1h-1zM763 381h1v1h-1zM763 393h1v1h-1zM763 406h1v1h-1zM763 418h1v1h-1zM763 431h1v1h-1zM763 443h1v1h-1zM763 456h1v1h-1zM763 468h1v1h-1zM763 481h1v1h-1zM763 493h1v1h-1zM763 505h1v1h-1zM763 518h1v1h-1zM763 530h1v1h-1zM763 543h1v1h-1zM763 555h1v1h-1zM763 568h1v1h-1zM763 580h1v1h-1zM763 593h1v1h-1zM763 605h1v1h-1zM763 618h1v1h-1zM763 630h1v1h-1zM763 642h1v1h-1zM775 132h1v1h-1zM775 144h1v1h-1zM775 157h1v1h-1zM775 169h1v1h-1zM775 181h1v1h-1zM775 194h1v1h-1zM775 206h1v1h-1zM775 219h1v1h-1zM775 231h1v1h-1zM775 244h1v1h-1zM775 256h1v1h-1zM775 269h1v1h-1zM775 281h1v1h-1zM775 294h1v1h-1zM775 306h1v1h-1zM775 319h1v1h-1zM775 331h1v1h-1zM775 343h1v1h-1zM775 356h1v1h-1zM775 368h1v1h-1zM775 381h1v1h-1zM775 393h1v1h-1zM775 406h1v1h-1zM775 418h1v1h-1zM775 431h1v1h-1zM775 443h1v1h-1zM775 456h1v1h-1zM775 468h1v1h-1zM775 481h1v1h-1zM775 493h1v1h-1zM775 505h1v1h-1zM775 518h1v1h-1zM775 530h1v1h-1zM775 543h1v1h-1zM775 555h1v1h-1zM775 568h1v1h-1zM775 580h1v1h-1zM775 593h1v1h-1zM775 605h1v1h-1zM775 618h1v1h-1zM775 630h1v1h-1zM775 642h1v1h-1zM788 132h1v1h-1zM788 144h1v1h-1zM788 157h1v1h-1zM788 169h1v1h-1zM788 181h1v1h-1zM788 194h1v1h-1zM788 206h1v1h-1zM788 219h1v1h-1zM788 231h1v1h-1zM788 244h1v1h-1zM788 256h1v1h-1zM788 269h1v1h-1zM788 281h1v1h-1zM788 294h1v1h-1zM788 306h1v1h-1zM788 319h1v1h-1zM788 331h1v1h-1zM788 343h1v1h-1zM788 356h1v1h-1zM788 368h1v1h-1zM788 381h1v1h-1zM788 393h1v1h-1zM788 406h1v1h-1zM788 418h1v1h-1zM788 431h1v1h-1zM788 443h1v1h-1zM788 456h1v1h-1zM788 468h1v1h-1zM788 481h1v1h-1zM788 493h1v1h-1zM788 505h1v1h-1zM788 518h1v1h-1zM788 530h1v1h-1zM788 543h1v1h-1zM788 555h1v1h-1zM788 568h1v1h-1zM788 580h1v1h-1zM788 593h1v1h-1zM788 605h1v1h-1zM788 618h1v1h-1zM788 630h1v1h-1zM788 642h1v1h-1zM800 132h1v1h-1zM800 144h1v1h-1zM800 157h1v1h-1zM800 169h1v1h-1zM800 181h1v1h-1zM800 194h1v1h-1zM800 206h1v1h-1zM800 219h1v1h-1zM800 231h1v1h-1zM800 244h1v1h-1zM800 256h1v1h-1zM800 269h1v1h-1zM800 281h1v1h-1zM800 294h1v1h-1zM800 306h1v1h-1zM800 319h1v1h-1zM800 331h1v1h-1zM800 343h1v1h-1zM800 356h1v1h-1zM800 368h1v1h-1zM800 381h1v1h-1zM800 393h1v1h-1zM800 406h1v1h-1zM800 418h1v1h-1zM800 431h1v1h-1zM800 443h1v1h-1zM800 456h1v1h-1zM800 468h1v1h-1zM800 481h1v1h-1zM800 493h1v1h-1zM800 505h1v1h-1zM800 518h1v1h-1zM800 530h1v1h-1zM800 543h1v1h-1zM800 555h1v1h-1zM800 568h1v1h-1zM800 580h1v1h-1zM800 593h1v1h-1zM800 605h1v1h-1zM800 618h1v1h-1zM800 630h1v1h-1zM800 642h1v1h-1zM813 132h1v1h-1zM813 144h1v1h-1zM813 157h1v1h-1zM813 169h1v1h-1zM813 181h1v1h-1zM813 194h1v1h-1zM813 206h1v1h-1zM813 219h1v1h-1zM813 231h1v1h-1zM813 244h1v1h-1zM813 256h1v1h-1zM813 269h1v1h-1zM813 281h1v1h-1zM813 294h1v1h-1zM813 306h1v1h-1zM813 319h1v1h-1zM813 331h1v1h-1zM813 343h1v1h-1zM813 356h1v1h-1zM813 368h1v1h-1zM813 381h1v1h-1zM813 393h1v1h-1zM813 406h1v1h-1zM813 418h1v1h-1zM813 431h1v1h-1zM813 443h1v1h-1zM813 456h1v1h-1zM813 468h1v1h-1zM813 481h1v1h-1zM813 493h1v1h-1zM813 505h1v1h-1zM813 518h1v1h-1zM813 530h1v1h-1zM813 543h1v1h-1zM813 555h1v1h-1zM813 568h1v1h-1zM813 580h1v1h-1zM813 593h1v1h-1zM813 605h1v1h-1zM813 618h1v1h-1zM813 630h1v1h-1zM813 642h1v1h-1zM825 132h1v1h-1zM825 144h1v1h-1zM825 157h1v1h-1zM825 169h1v1h-1zM825 181h1v1h-1zM825 194h1v1h-1zM825 206h1v1h-1zM825 219h1v1h-1zM825 231h1v1h-1zM825 244h1v1h-1zM825 256h1v1h-1zM825 269h1v1h-1zM825 281h1v1h-1zM825 294h1v1h-1zM825 306h1v1h-1zM825 319h1v1h-1zM825 331h1v1h-1zM825 343h1v1h-1zM825 356h1v1h-1zM825 368h1v1h-1zM825 381h1v1h-1zM825 393h1v1h-1zM825 406h1v1h-1zM825 418h1v1h-1zM825 431h1v1h-1zM825 443h1v1h-1zM825 456h1v1h-1zM825 468h1v1h-1zM825 481h1v1h-1zM825 493h1v1h-1zM825 505h1v1h-1zM825 518h1v1h-1zM825 530h1v1h-1zM825 543h1v1h-1zM825 555h1v1h-1zM825 568h1v1h-1zM825 580h1v1h-1zM825 593h1v1h-1zM825 605h1v1h-1zM825 618h1v1h-1zM825 630h1v1h-1zM825 642h1v1h-1zM838 132h1v1h-1zM838 144h1v1h-1zM838 157h1v1h-1zM838 181h1v1h-1zM838 194h1v1h-1zM838 206h1v1h-1zM838 219h1v1h-1zM838 231h1v1h-1zM838 244h1v1h-1zM838 256h1v1h-1zM838 281h1v1h-1zM838 294h1v1h-1zM838 306h1v1h-1zM838 319h1v1h-1zM838 331h1v1h-1zM838 343h1v1h-1zM838 356h1v1h-1zM838 381h1v1h-1zM838 393h1v1h-1zM838 406h1v1h-1zM838 418h1v1h-1zM838 431h1v1h-1zM838 443h1v1h-1zM838 456h1v1h-1zM838 481h1v1h-1zM838 493h1v1h-1zM838 505h1v1h-1zM838 518h1v1h-1zM838 530h1v1h-1zM838 543h1v1h-1zM838 555h1v1h-1zM838 580h1v1h-1zM838 593h1v1h-1zM838 605h1v1h-1zM838 618h1v1h-1zM838 630h1v1h-1zM838 642h1v1h-1zM850 132h1v1h-1zM850 144h1v1h-1zM850 157h1v1h-1zM850 169h1v1h-1zM850 181h1v1h-1zM850 194h1v1h-1zM850 206h1v1h-1zM850 219h1v1h-1zM850 231h1v1h-1zM850 244h1v1h-1zM850 256h1v1h-1zM850 269h1v1h-1zM850 281h1v1h-1zM850 294h1v1h-1zM850 306h1v1h-1zM850 319h1v1h-1zM850 331h1v1h-1zM850 343h1v1h-1zM850 356h1v1h-1zM850 368h1v1h-1zM850 381h1v1h-1zM850 393h1v1h-1zM850 406h1v1h-1zM850 418h1v1h-1zM850 431h1v1h-1zM850 443h1v1h-1zM850 456h1v1h-1zM850 468h1v1h-1zM850 481h1v1h-1zM850 493h1v1h-1zM850 505h1v1h-1zM850 518h1v1h-1zM850 530h1v1h-1zM850 543h1v1h-1zM850 555h1v1h-1zM850 568h1v1h-1zM850 580h1v1h-1zM850 593h1v1h-1zM850 605h1v1h-1zM850 618h1v1h-1zM850 630h1v1h-1zM850 642h1v1h-1zM863 132h1v1h-1zM863 144h1v1h-1zM863 157h1v1h-1zM863 169h1v1h-1zM863 181h1v1h-1zM863 194h1v1h-1zM863 206h1v1h-1zM863 219h1v1h-1zM863 231h1v1h-1zM863 244h1v1h-1zM863 256h1v1h-1zM863 269h1v1h-1zM863 281h1v1h-1zM863 294h1v1h-1zM863 306h1v1h-1zM863 319h1v1h-1zM863 331h1v1h-1zM863 343h1v1h-1zM863 356h1v1h-1zM863 368h1v1h-1zM863 381h1v1h-1zM863 393h1v1h-1zM863 406h1v1h-1zM863 418h1v1h-1zM863 431h1v1h-1zM863 443h1v1h-1zM863 456h1v1h-1zM863 468h1v1h-1zM863 481h1v1h-1zM863 493h1v1h-1zM863 505h1v1h-1zM863 518h1v1h-1zM863 530h1v1h-1zM863 543h1v1h-1zM863 555h1v1h-1zM863 568h1v1h-1zM863 580h1v1h-1zM863 593h1v1h-1zM863 605h1v1h-1zM863 618h1v1h-1zM863 630h1v1h-1zM863 642h1v1h-1zM875 132h1v1h-1zM875 144h1v1h-1zM875 157h1v1h-1zM875 169h1v1h-1zM875 181h1v1h-1zM875 194h1v1h-1zM875 206h1v1h-1zM875 219h1v1h-1zM875 231h1v1h-1zM875 244h1v1h-1zM875 256h1v1h-1zM875 269h1v1h-1zM875 281h1v1h-1zM875 294h1v1h-1zM875 306h1v1h-1zM875 319h1v1h-1zM875 331h1v1h-1zM875 343h1v1h-1zM875 356h1v1h-1zM875 368h1v1h-1zM875 381h1v1h-1zM875 393h1v1h-1zM875 406h1v1h-1zM875 418h1v1h-1zM875 431h1v1h-1zM875 443h1v1h-1zM875 456h1v1h-1zM875 468h1v1h-1zM875 481h1v1h-1zM875 493h1v1h-1zM875 505h1v1h-1zM875 518h1v1h-1zM875 530h1v1h-1zM875 543h1v1h-1zM875 555h1v1h-1zM875 568h1v1h-1zM875 580h1v1h-1zM875 593h1v1h-1zM875 605h1v1h-1zM875 618h1v1h-1zM875 630h1v1h-1zM875 642h1v1h-1zM887 132h1v1h-1zM887 144h1v1h-1zM887 157h1v1h-1zM887 169h1v1h-1zM887 181h1v1h-1zM887 194h1v1h-1zM887 206h1v1h-1zM887 219h1v1h-1zM887 231h1v1h-1zM887 244h1v1h-1zM887 256h1v1h-1zM887 269h1v1h-1zM887 281h1v1h-1zM887 294h1v1h-1zM887 306h1v1h-1zM887 319h1v1h-1zM887 331h1v1h-1zM887 343h1v1h-1zM887 356h1v1h-1zM887 368h1v1h-1zM887 381h1v1h-1zM887 393h1v1h-1zM887 406h1v1h-1zM887 418h1v1h-1zM887 431h1v1h-1zM887 443h1v1h-1zM887 456h1v1h-1zM887 468h1v1h-1zM887 481h1v1h-1zM887 493h1v1h-1zM887 505h1v1h-1zM887 518h1v1h-1zM887 530h1v1h-1zM887 543h1v1h-1zM887 555h1v1h-1zM887 568h1v1h-1zM887 580h1v1h-1zM887 593h1v1h-1zM887 605h1v1h-1zM887 618h1v1h-1zM887 630h1v1h-1zM887 642h1v1h-1zM900 132h1v1h-1zM900 144h1v1h-1zM900 157h1v1h-1zM900 169h1v1h-1zM900 181h1v1h-1zM900 194h1v1h-1zM900 206h1v1h-1zM900 219h1v1h-1zM900 231h1v1h-1zM900 244h1v1h-1zM900 256h1v1h-1zM900 269h1v1h-1zM900 281h1v1h-1zM900 294h1v1h-1zM900 306h1v1h-1zM900 319h1v1h-1zM900 331h1v1h-1zM900 343h1v1h-1zM900 356h1v1h-1zM900 368h1v1h-1zM900 381h1v1h-1zM900 393h1v1h-1zM900 406h1v1h-1zM900 418h1v1h-1zM900 431h1v1h-1zM900 443h1v1h-1zM900 456h1v1h-1zM900 468h1v1h-1zM900 481h1v1h-1zM900 493h1v1h-1zM900 505h1v1h-1zM900 518h1v1h-1zM900 530h1v1h-1zM900 543h1v1h-1zM900 555h1v1h-1zM900 568h1v1h-1zM900 580h1v1h-1zM900 593h1v1h-1zM900 605h1v1h-1zM900 618h1v1h-1zM900 630h1v1h-1zM900 642h1v1h-1zM912 132h1v1h-1zM912 144h1v1h-1zM912 157h1v1h-1zM912 169h1v1h-1zM912 181h1v1h-1zM912 194h1v1h-1zM912 206h1v1h-1zM912 219h1v1h-1zM912 231h1v1h-1zM912 244h1v1h-1zM912 256h1v1h-1zM912 269h1v1h-1zM912 281h1v1h-1zM912 294h1v1h-1zM912 306h1v1h-1zM912 319h1v1h-1zM912 331h1v1h-1zM912 343h1v1h-1zM912 356h1v1h-1zM912 368h1v1h-1zM912 381h1v1h-1zM912 393h1v1h-1zM912 406h1v1h-1zM912 418h1v1h-1zM912 431h1v1h-1zM912 443h1v1h-1zM912 456h1v1h-1zM912 468h1v1h-1zM912 481h1v1h-1zM912 493h1v1h-1zM912 505h1v1h-1zM912 518h1v1h-1zM912 530h1v1h-1zM912 543h1v1h-1zM912 555h1v1h-1zM912 568h1v1h-1zM912 580h1v1h-1zM912 593h1v1h-1zM912 605h1v1h-1zM912 618h1v1h-1zM912 630h1v1h-1zM912 642h1v1h-1zM925 132h1v1h-1zM925 144h1v1h-1zM925 157h1v1h-1zM925 169h1v1h-1zM925 181h1v1h-1zM925 194h1v1h-1zM925 206h1v1h-1zM925 219h1v1h-1zM925 231h1v1h-1zM925 244h1v1h-1zM925 256h1v1h-1zM925 269h1v1h-1zM925 281h1v1h-1zM925 294h1v1h-1zM925 306h1v1h-1zM925 319h1v1h-1zM925 331h1v1h-1zM925 343h1v1h-1zM925 356h1v1h-1zM925 368h1v1h-1zM925 381h1v1h-1zM925 393h1v1h-1zM925 406h1v1h-1zM925 418h1v1h-1zM925 431h1v1h-1zM925 443h1v1h-1zM925 456h1v1h-1zM925 468h1v1h-1zM925 481h1v1h-1zM925 493h1v1h-1zM925 505h1v1h-1zM925 518h1v1h-1zM925 530h1v1h-1zM925 543h1v1h-1zM925 555h1v1h-1zM925 568h1v1h-1zM925 580h1v1h-1zM925 593h1v1h-1zM925 605h1v1h-1zM925 618h1v1h-1zM925 630h1v1h-1zM925 642h1v1h-1zM937 132h1v1h-1zM937 144h1v1h-1zM937 157h1v1h-1zM937 181h1v1h-1zM937 194h1v1h-1zM937 206h1v1h-1zM937 219h1v1h-1zM937 231h1v1h-1zM937 244h1v1h-1zM937 256h1v1h-1zM937 281h1v1h-1zM937 294h1v1h-1zM937 306h1v1h-1zM937 319h1v1h-1zM937 331h1v1h-1zM937 343h1v1h-1zM937 356h1v1h-1zM937 381h1v1h-1zM937 393h1v1h-1zM937 406h1v1h-1zM937 418h1v1h-1zM937 431h1v1h-1zM937 443h1v1h-1zM937 456h1v1h-1zM937 481h1v1h-1zM937 493h1v1h-1zM937 505h1v1h-1zM937 518h1v1h-1zM937 530h1v1h-1zM937 543h1v1h-1zM937 555h1v1h-1zM937 580h1v1h-1zM937 593h1v1h-1zM937 605h1v1h-1zM937 618h1v1h-1zM937 630h1v1h-1zM937 642h1v1h-1zM950 132h1v1h-1zM950 144h1v1h-1zM950 157h1v1h-1zM950 169h1v1h-1zM950 181h1v1h-1zM950 194h1v1h-1zM950 206h1v1h-1zM950 219h1v1h-1zM950 231h1v1h-1zM950 244h1v1h-1zM950 256h1v1h-1zM950 269h1v1h-1zM950 281h1v1h-1zM950 294h1v1h-1zM950 306h1v1h-1zM950 319h1v1h-1zM950 331h1v1h-1zM950 343h1v1h-1zM950 356h1v1h-1zM950 368h1v1h-1zM950 381h1v1h-1zM950 393h1v1h-1zM950 406h1v1h-1zM950 418h1v1h-1zM950 431h1v1h-1zM950 443h1v1h-1zM950 456h1v1h-1zM950 468h1v1h-1zM950 481h1v1h-1zM950 493h1v1h-1zM950 505h1v1h-1zM950 518h1v1h-1zM950 530h1v1h-1zM950 543h1v1h-1zM950 555h1v1h-1zM950 568h1v1h-1zM950 580h1v1h-1zM950 593h1v1h-1zM950 605h1v1h-1zM950 618h1v1h-1zM950 630h1v1h-1zM950 642h1v1h-1zM962 132h1v1h-1zM962 144h1v1h-1zM962 157h1v1h-1zM962 169h1v1h-1zM962 181h1v1h-1zM962 194h1v1h-1zM962 206h1v1h-1zM962 219h1v1h-1zM962 231h1v1h-1zM962 244h1v1h-1zM962 256h1v1h-1zM962 269h1v1h-1zM962 281h1v1h-1zM962 294h1v1h-1zM962 306h1v1h-1zM962 319h1v1h-1zM962 331h1v1h-1zM962 343h1v1h-1zM962 356h1v1h-1zM962 368h1v1h-1zM962 381h1v1h-1zM962 393h1v1h-1zM962 406h1v1h-1zM962 418h1v1h-1zM962 431h1v1h-1zM962 443h1v1h-1zM962 456h1v1h-1zM962 468h1v1h-1zM962 481h1v1h-1zM962 493h1v1h-1zM962 505h1v1h-1zM962 518h1v1h-1zM962 530h1v1h-1zM962 543h1v1h-1zM962 555h1v1h-1zM962 568h1v1h-1zM962 580h1v1h-1zM962 593h1v1h-1zM962 605h1v1h-1zM962 618h1v1h-1zM962 630h1v1h-1zM962 642h1v1h-1zM975 132h1v1h-1zM975 144h1v1h-1zM975 157h1v1h-1zM975 169h1v1h-1zM975 181h1v1h-1zM975 194h1v1h-1zM975 206h1v1h-1zM975 219h1v1h-1zM975 231h1v1h-1zM975 244h1v1h-1zM975 256h1v1h-1zM975 269h1v1h-1zM975 281h1v1h-1zM975 294h1v1h-1zM975 306h1v1h-1zM975 319h1v1h-1zM975 331h1v1h-1zM975 343h1v1h-1zM975 356h1v1h-1zM975 368h1v1h-1zM975 381h1v1h-1zM975 393h1v1h-1zM975 406h1v1h-1zM975 418h1v1h-1zM975 431h1v1h-1zM975 443h1v1h-1zM975 456h1v1h-1zM975 468h1v1h-1zM975 481h1v1h-1zM975 493h1v1h-1zM975 505h1v1h-1zM975 518h1v1h-1zM975 530h1v1h-1zM975 543h1v1h-1zM975 555h1v1h-1zM975 568h1v1h-1zM975 580h1v1h-1zM975 593h1v1h-1zM975 605h1v1h-1zM975 618h1v1h-1zM975 630h1v1h-1zM975 642h1v1h-1zM987 132h1v1h-1zM987 144h1v1h-1zM987 157h1v1h-1zM987 169h1v1h-1zM987 181h1v1h-1zM987 194h1v1h-1zM987 206h1v1h-1zM987 219h1v1h-1zM987 231h1v1h-1zM987 244h1v1h-1zM987 256h1v1h-1zM987 269h1v1h-1zM987 281h1v1h-1zM987 294h1v1h-1zM987 306h1v1h-1zM987 319h1v1h-1zM987 331h1v1h-1zM987 343h1v1h-1zM987 356h1v1h-1zM987 368h1v1h-1zM987 381h1v1h-1zM987 393h1v1h-1zM987 406h1v1h-1zM987 418h1v1h-1zM987 431h1v1h-1zM987 443h1v1h-1zM987 456h1v1h-1zM987 468h1v1h-1zM987 481h1v1h-1zM987 493h1v1h-1zM987 505h1v1h-1zM987 518h1v1h-1zM987 530h1v1h-1zM987 543h1v1h-1zM987 555h1v1h-1zM987 568h1v1h-1zM987 580h1v1h-1zM987 593h1v1h-1zM987 605h1v1h-1zM987 618h1v1h-1zM987 630h1v1h-1zM987 642h1v1h-1zM1000 132h1v1h-1zM1000 144h1v1h-1zM1000 157h1v1h-1zM1000 169h1v1h-1zM1000 181h1v1h-1zM1000 194h1v1h-1zM1000 206h1v1h-1zM1000 219h1v1h-1zM1000 231h1v1h-1zM1000 244h1v1h-1zM1000 256h1v1h-1zM1000 269h1v1h-1zM1000 281h1v1h-1zM1000 294h1v1h-1zM1000 306h1v1h-1zM1000 319h1v1h-1zM1000 331h1v1h-1zM1000 343h1v1h-1zM1000 356h1v1h-1zM1000 368h1v1h-1zM1000 381h1v1h-1zM1000 393h1v1h-1zM1000 406h1v1h-1zM1000 418h1v1h-1zM1000 431h1v1h-1zM1000 443h1v1h-1zM1000 456h1v1h-1zM1000 468h1v1h-1zM1000 481h1v1h-1zM1000 493h1v1h-1zM1000 505h1v1h-1zM1000 518h1v1h-1zM1000 530h1v1h-1zM1000 543h1v1h-1zM1000 555h1v1h-1zM1000 568h1v1h-1zM1000 580h1v1h-1zM1000 593h1v1h-1zM1000 605h1v1h-1zM1000 618h1v1h-1zM1000 630h1v1h-1zM1000 642h1v1h-1zM1012 132h1v1h-1zM1012 144h1v1h-1zM1012 157h1v1h-1zM1012 169h1v1h-1zM1012 181h1v1h-1zM1012 194h1v1h-1zM1012 206h1v1h-1zM1012 219h1v1h-1zM1012 231h1v1h-1zM1012 244h1v1h-1zM1012 256h1v1h-1zM1012 269h1v1h-1zM1012 281h1v1h-1zM1012 294h1v1h-1zM1012 306h1v1h-1zM1012 319h1v1h-1zM1012 331h1v1h-1zM1012 343h1v1h-1zM1012 356h1v1h-1zM1012 368h1v1h-1zM1012 381h1v1h-1zM1012 393h1v1h-1zM1012 406h1v1h-1zM1012 418h1v1h-1zM1012 431h1v1h-1zM1012 443h1v1h-1zM1012 456h1v1h-1zM1012 468h1v1h-1zM1012 481h1v1h-1zM1012 493h1v1h-1zM1012 505h1v1h-1zM1012 518h1v1h-1zM1012 530h1v1h-1zM1012 543h1v1h-1zM1012 555h1v1h-1zM1012 568h1v1h-1zM1012 580h1v1h-1zM1012 593h1v1h-1zM1012 605h1v1h-1zM1012 618h1v1h-1zM1012 630h1v1h-1zM1012 642h1v1h-1zM1024 132h1v1h-1zM1024 144h1v1h-1zM1024 157h1v1h-1zM1024 169h1v1h-1zM1024 181h1v1h-1zM1024 194h1v1h-1zM1024 206h1v1h-1zM1024 219h1v1h-1zM1024 231h1v1h-1zM1024 244h1v1h-1zM1024 256h1v1h-1zM1024 269h1v1h-1zM1024 281h1v1h-1zM1024 294h1v1h-1zM1024 306h1v1h-1zM1024 319h1v1h-1zM1024 331h1v1h-1zM1024 343h1v1h-1zM1024 356h1v1h-1zM1024 368h1v1h-1zM1024 381h1v1h-1zM1024 393h1v1h-1zM1024 406h1v1h-1zM1024 418h1v1h-1zM1024 431h1v1h-1zM1024 443h1v1h-1zM1024 456h1v1h-1zM1024 468h1v1h-1zM1024 481h1v1h-1zM1024 493h1v1h-1zM1024 505h1v1h-1zM1024 518h1v1h-1zM1024 530h1v1h-1zM1024 543h1v1h-1zM1024 555h1v1h-1zM1024 568h1v1h-1zM1024 580h1v1h-1zM1024 593h1v1h-1zM1024 605h1v1h-1zM1024 618h1v1h-1zM1024 630h1v1h-1zM1024 642h1v1h-1zM1037 132h1v1h-1zM1037 144h1v1h-1zM1037 157h1v1h-1zM1037 181h1v1h-1zM1037 194h1v1h-1zM1037 206h1v1h-1zM1037 219h1v1h-1zM1037 231h1v1h-1zM1037 244h1v1h-1zM1037 256h1v1h-1zM1037 281h1v1h-1zM1037 294h1v1h-1zM1037 306h1v1h-1zM1037 319h1v1h-1zM1037 331h1v1h-1zM1037 343h1v1h-1zM1037 356h1v1h-1zM1037 381h1v1h-1zM1037 393h1v1h-1zM1037 406h1v1h-1zM1037 418h1v1h-1zM1037 431h1v1h-1zM1037 443h1v1h-1zM1037 456h1v1h-1zM1037 481h1v1h-1zM1037 493h1v1h-1zM1037 505h1v1h-1zM1037 518h1v1h-1zM1037 530h1v1h-1zM1037 543h1v1h-1zM1037 555h1v1h-1zM1037 580h1v1h-1zM1037 593h1v1h-1zM1037 605h1v1h-1zM1037 618h1v1h-1zM1037 630h1v1h-1zM1037 642h1v1h-1zM1049 132h1v1h-1zM1049 144h1v1h-1zM1049 157h1v1h-1zM1049 169h1v1h-1zM1049 181h1v1h-1zM1049 194h1v1h-1zM1049 206h1v1h-1zM1049 219h1v1h-1zM1049 231h1v1h-1zM1049 244h1v1h-1zM1049 256h1v1h-1zM1049 269h1v1h-1zM1049 281h1v1h-1zM1049 294h1v1h-1zM1049 306h1v1h-1zM1049 319h1v1h-1zM1049 331h1v1h-1zM1049 343h1v1h-1zM1049 356h1v1h-1zM1049 368h1v1h-1zM1049 381h1v1h-1zM1049 393h1v1h-1zM1049 406h1v1h-1zM1049 418h1v1h-1zM1049 431h1v1h-1zM1049 443h1v1h-1zM1049 456h1v1h-1zM1049 468h1v1h-1zM1049 481h1v1h-1zM1049 493h1v1h-1zM1049 505h1v1h-1zM1049 518h1v1h-1zM1049 530h1v1h-1zM1049 543h1v1h-1zM1049 555h1v1h-1zM1049 568h1v1h-1zM1049 580h1v1h-1zM1049 593h1v1h-1zM1049 605h1v1h-1zM1049 618h1v1h-1zM1049 630h1v1h-1zM1049 642h1v1h-1zM1062 132h1v1h-1zM1062 144h1v1h-1zM1062 157h1v1h-1zM1062 169h1v1h-1zM1062 181h1v1h-1zM1062 194h1v1h-1zM1062 206h1v1h-1zM1062 219h1v1h-1zM1062 231h1v1h-1zM1062 244h1v1h-1zM1062 256h1v1h-1zM1062 269h1v1h-1zM1062 281h1v1h-1zM1062 294h1v1h-1zM1062 306h1v1h-1zM1062 319h1v1h-1zM1062 331h1v1h-1zM1062 343h1v1h-1zM1062 356h1v1h-1zM1062 368h1v1h-1zM1062 381h1v1h-1zM1062 393h1v1h-1zM1062 406h1v1h-1zM1062 418h1v1h-1zM1062 431h1v1h-1zM1062 443h1v1h-1zM1062 456h1v1h-1zM1062 468h1v1h-1zM1062 481h1v1h-1zM1062 493h1v1h-1zM1062 505h1v1h-1zM1062 518h1v1h-1zM1062 530h1v1h-1zM1062 543h1v1h-1zM1062 555h1v1h-1zM1062 568h1v1h-1zM1062 580h1v1h-1zM1062 593h1v1h-1zM1062 605h1v1h-1zM1062 618h1v1h-1zM1062 630h1v1h-1zM1062 642h1v1h-1zM1074 132h1v1h-1zM1074 144h1v1h-1zM1074 157h1v1h-1zM1074 169h1v1h-1zM1074 181h1v1h-1zM1074 194h1v1h-1zM1074 206h1v1h-1zM1074 219h1v1h-1zM1074 231h1v1h-1zM1074 244h1v1h-1zM1074 256h1v1h-1zM1074 269h1v1h-1zM1074 281h1v1h-1zM1074 294h1v1h-1zM1074 306h1v1h-1zM1074 319h1v1h-1zM1074 331h1v1h-1zM1074 343h1v1h-1zM1074 356h1v1h-1zM1074 368h1v1h-1zM1074 381h1v1h-1zM1074 393h1v1h-1zM1074 406h1v1h-1zM1074 418h1v1h-1zM1074 431h1v1h-1zM1074 443h1v1h-1zM1074 456h1v1h-1zM1074 468h1v1h-1zM1074 481h1v1h-1zM1074 493h1v1h-1zM1074 505h1v1h-1zM1074 518h1v1h-1zM1074 530h1v1h-1zM1074 543h1v1h-1zM1074 555h1v1h-1zM1074 568h1v1h-1zM1074 580h1v1h-1zM1074 593h1v1h-1zM1074 605h1v1h-1zM1074 618h1v1h-1zM1074 630h1v1h-1zM1074 642h1v1h-1zM1087 132h1v1h-1zM1087 144h1v1h-1zM1087 157h1v1h-1zM1087 169h1v1h-1zM1087 181h1v1h-1zM1087 194h1v1h-1zM1087 206h1v1h-1zM1087 219h1v1h-1zM1087 231h1v1h-1zM1087 244h1v1h-1zM1087 256h1v1h-1zM1087 269h1v1h-1zM1087 281h1v1h-1zM1087 294h1v1h-1zM1087 306h1v1h-1zM1087 319h1v1h-1zM1087 331h1v1h-1zM1087 343h1v1h-1zM1087 356h1v1h-1zM1087 368h1v1h-1zM1087 381h1v1h-1zM1087 393h1v1h-1zM1087 406h1v1h-1zM1087 418h1v1h-1zM1087 431h1v1h-1zM1087 443h1v1h-1zM1087 456h1v1h-1zM1087 468h1v1h-1zM1087 481h1v1h-1zM1087 493h1v1h-1zM1087 505h1v1h-1zM1087 518h1v1h-1zM1087 530h1v1h-1zM1087 543h1v1h-1zM1087 555h1v1h-1zM1087 568h1v1h-1zM1087 580h1v1h-1zM1087 593h1v1h-1zM1087 605h1v1h-1zM1087 618h1v1h-1zM1087 630h1v1h-1zM1087 642h1v1h-1zM1099 132h1v1h-1zM1099 144h1v1h-1zM1099 157h1v1h-1zM1099 169h1v1h-1zM1099 181h1v1h-1zM1099 194h1v1h-1zM1099 206h1v1h-1zM1099 219h1v1h-1zM1099 231h1v1h-1zM1099 244h1v1h-1zM1099 256h1v1h-1zM1099 269h1v1h-1zM1099 281h1v1h-1zM1099 294h1v1h-1zM1099 306h1v1h-1zM1099 319h1v1h-1zM1099 331h1v1h-1zM1099 343h1v1h-1zM1099 356h1v1h-1zM1099 368h1v1h-1zM1099 381h1v1h-1zM1099 393h1v1h-1zM1099 406h1v1h-1zM1099 418h1v1h-1zM1099 431h1v1h-1zM1099 443h1v1h-1zM1099 456h1v1h-1zM1099 468h1v1h-1zM1099 481h1v1h-1zM1099 493h1v1h-1zM1099 505h1v1h-1zM1099 518h1v1h-1zM1099 530h1v1h-1zM1099 543h1v1h-1zM1099 555h1v1h-1zM1099 568h1v1h-1zM1099 580h1v1h-1zM1099 593h1v1h-1zM1099 605h1v1h-1zM1099 618h1v1h-1zM1099 630h1v1h-1zM1099 642h1v1h-1zM1112 132h1v1h-1zM1112 144h1v1h-1zM1112 157h1v1h-1zM1112 169h1v1h-1zM1112 181h1v1h-1zM1112 194h1v1h-1zM1112 206h1v1h-1zM1112 219h1v1h-1zM1112 231h1v1h-1zM1112 244h1v1h-1zM1112 256h1v1h-1zM1112 269h1v1h-1zM1112 281h1v1h-1zM1112 294h1v1h-1zM1112 306h1v1h-1zM1112 319h1v1h-1zM1112 331h1v1h-1zM1112 343h1v1h-1zM1112 356h1v1h-1zM1112 368h1v1h-1zM1112 381h1v1h-1zM1112 393h1v1h-1zM1112 406h1v1h-1zM1112 418h1v1h-1zM1112 431h1v1h-1zM1112 443h1v1h-1zM1112 456h1v1h-1zM1112 468h1v1h-1zM1112 481h1v1h-1zM1112 493h1v1h-1zM1112 505h1v1h-1zM1112 518h1v1h-1zM1112 530h1v1h-1zM1112 543h1v1h-1zM1112 555h1v1h-1zM1112 568h1v1h-1zM1112 580h1v1h-1zM1112 593h1v1h-1zM1112 605h1v1h-1zM1112 618h1v1h-1zM1112 630h1v1h-1zM1112 642h1v1h-1zM1124 132h1v1h-1zM1124 144h1v1h-1zM1124 157h1v1h-1zM1124 169h1v1h-1zM1124 181h1v1h-1zM1124 194h1v1h-1zM1124 206h1v1h-1zM1124 219h1v1h-1zM1124 231h1v1h-1zM1124 244h1v1h-1zM1124 256h1v1h-1zM1124 269h1v1h-1zM1124 281h1v1h-1zM1124 294h1v1h-1zM1124 306h1v1h-1zM1124 319h1v1h-1zM1124 331h1v1h-1zM1124 343h1v1h-1zM1124 356h1v1h-1zM1124 368h1v1h-1zM1124 381h1v1h-1zM1124 393h1v1h-1zM1124 406h1v1h-1zM1124 418h1v1h-1zM1124 431h1v1h-1zM1124 443h1v1h-1zM1124 456h1v1h-1zM1124 468h1v1h-1zM1124 481h1v1h-1zM1124 493h1v1h-1zM1124 505h1v1h-1zM1124 518h1v1h-1zM1124 530h1v1h-1zM1124 543h1v1h-1zM1124 555h1v1h-1zM1124 568h1v1h-1zM1124 580h1v1h-1zM1124 593h1v1h-1zM1124 605h1v1h-1zM1124 618h1v1h-1zM1124 630h1v1h-1zM1124 642h1v1h-1zM1137 132h1v1h-1zM1137 144h1v1h-1zM1137 157h1v1h-1zM1137 181h1v1h-1zM1137 194h1v1h-1zM1137 206h1v1h-1zM1137 219h1v1h-1zM1137 231h1v1h-1zM1137 244h1v1h-1zM1137 256h1v1h-1zM1137 281h1v1h-1zM1137 294h1v1h-1zM1137 306h1v1h-1zM1137 319h1v1h-1zM1137 331h1v1h-1zM1137 343h1v1h-1zM1137 356h1v1h-1zM1137 381h1v1h-1zM1137 393h1v1h-1zM1137 406h1v1h-1zM1137 418h1v1h-1zM1137 431h1v1h-1zM1137 443h1v1h-1zM1137 456h1v1h-1zM1137 481h1v1h-1zM1137 493h1v1h-1zM1137 505h1v1h-1zM1137 518h1v1h-1zM1137 530h1v1h-1zM1137 543h1v1h-1zM1137 555h1v1h-1zM1137 580h1v1h-1zM1137 593h1v1h-1zM1137 605h1v1h-1zM1137 618h1v1h-1zM1137 630h1v1h-1zM1137 642h1v1h-1zM1149 132h1v1h-1zM1149 144h1v1h-1zM1149 157h1v1h-1zM1149 169h1v1h-1zM1149 181h1v1h-1zM1149 194h1v1h-1zM1149 206h1v1h-1zM1149 219h1v1h-1zM1149 231h1v1h-1zM1149 244h1v1h-1zM1149 256h1v1h-1zM1149 269h1v1h-1zM1149 281h1v1h-1zM1149 294h1v1h-1zM1149 306h1v1h-1zM1149 319h1v1h-1zM1149 331h1v1h-1zM1149 343h1v1h-1zM1149 356h1v1h-1zM1149 368h1v1h-1zM1149 381h1v1h-1zM1149 393h1v1h-1zM1149 406h1v1h-1zM1149 418h1v1h-1zM1149 431h1v1h-1zM1149 443h1v1h-1zM1149 456h1v1h-1zM1149 468h1v1h-1zM1149 481h1v1h-1zM1149 493h1v1h-1zM1149 505h1v1h-1zM1149 518h1v1h-1zM1149 530h1v1h-1zM1149 543h1v1h-1zM1149 555h1v1h-1zM1149 568h1v1h-1zM1149 580h1v1h-1zM1149 593h1v1h-1zM1149 605h1v1h-1zM1149 618h1v1h-1zM1149 630h1v1h-1zM1149 642h1v1h-1z" fill="#989898"/>
<path d="M40 169h3v1h-3zM41 168h1v3h-1zM40 269h3v1h-3zM41 268h1v3h-1zM40 368h3v1h-3zM41 367h1v3h-1zM40 468h3v1h-3zM41 467h1v3h-1zM40 568h3v1h-3zM41 567h1v3h-1zM139 169h3v1h-3zM140 168h1v3h-1zM139 269h3v1h-3zM140 268h1v3h-1zM139 368h3v1h-3zM140 367h1v3h-1zM139 468h3v1h-3zM140 467h1v3h-1zM139 568h3v1h-3zM140 567h1v3h-1zM239 169h3v1h-3zM240 168h1v3h-1zM239 269h3v1h-3zM240 268h1v3h-1zM239 368h3v1h-3zM240 367h1v3h-1zM239 468h3v1h-3zM240 467h1v3h-1zM239 568h3v1h-3zM240 567h1v3h-1zM338 169h3v1h-3zM339 168h1v3h-1zM338 269h3v1h-3zM339 268h1v3h-1zM338 368h3v1h-3zM339 367h1v3h-1zM338 468h3v1h-3zM339 467h1v3h-1zM338 568h3v1h-3zM339 567h1v3h-1zM438 169h3v1h-3zM439 168h1v3h-1zM438 269h3v1h-3zM439 268h1v3h-1zM438 368h3v1h-3zM439 367h1v3h-1zM438 468h3v1h-3zM439 467h1v3h-1zM438 568h3v1h-3zM439 567h1v3h-1zM538 169h3v1h-3zM539 168h1v3h-1zM538 269h3v1h-3zM539 268h1v3h-1zM538 368h3v1h-3zM539 367h1v3h-1zM538 468h3v1h-3zM539 467h1v3h-1zM538 568h3v1h-3zM539 567h1v3h-1zM637 169h3v1h-3zM638 168h1v3h-1zM637 269h3v1h-3zM638 268h1v3h-1zM637 368h3v1h-3zM638 367h1v3h-1zM637 468h3v1h-3zM638 467h1v3h-1zM637 568h3v1h-3zM638 567h1v3h-1zM737 169h3v1h-3zM738 168h1v3h-1zM737 269h3v1h-3zM738 268h1v3h-1zM737 368h3v1h-3zM738 367h1v3h-1zM737 468h3v1h-3zM738 467h1v3h-1zM737 568h3v1h-3zM738 567h1v3h-1zM837 169h3v1h-3zM838 168h1v3h-1zM837 269h3v1h-3zM838 268h1v3h-1zM837 368h3v1h-3zM838 367h1v3h-1zM837 468h3v1h-3zM838 467h1v3h-1zM837 568h3v1h-3zM838 567h1v3h-1zM936 169h3v1h-3zM937 168h1v3h-1zM936 269h3v1h-3zM937 268h1v3h-1zM936 368h3v1h-3zM937 367h1v3h-1zM936 468h3v1h-3zM937 467h1v3h-1zM936 568h3v1h-3zM937 567h1v3h-1zM1036 169h3v1h-3zM1037 168h1v3h-1zM1036 269h3v1h-3zM1037 268h1v3h-1zM1036 368h3v1h-3zM1037 367h1v3h-1zM1036 468h3v1h-3zM1037 467h1v3h-1zM1036 568h3v1h-3zM1037 567h1v3h-1zM1136 169h3v1h-3zM1137 168h1v3h-1zM1136 269h3v1h-3zM1137 268h1v3h-1zM1136 368h3v1h-3zM1137 367h1v3h-1zM1136 468h3v1h-3zM1137 467h1v3h-1zM1136 568h3v1h-3zM1137 567h1v3h-1z" fill="#ffffff"/>
<path d="M90 201.0 H96.5 L103 206.5 L96.5 212.0 H90 Z" fill="#ff1010"/>
<path d="M103 206.5 H140.5" stroke="#70ace6" fill="none"/>
<path d="M90 226.0 H96.5 L103 231.5 L96.5 237.0 H90 Z" fill="#ff1010"/>
<path d="M103 231.5 H140.5" stroke="#70ace6" fill="none"/>
<path d="M90 251.0 H96.5 L103 256.5 L96.5 262.0 H90 Z" fill="#ff1010"/>
<path d="M103 256.5 H140.5" stroke="#70ace6" fill="none"/>
<path d="M90 276.0 H96.5 L103 281.5 L96.5 287.0 H90 Z" fill="#ff1010"/>
<path d="M103 281.5 H140.5" stroke="#70ace6" fill="none"/>
<path d="M90 301.0 H96.5 L103 306.5 L96.5 312.0 H90 Z" fill="#ff1010"/>
<path d="M103 306.5 H140.5" stroke="#70ace6" fill="none"/>
<path d="M302.5 200.5 H352.865 A24.90919999999994 31.150000000000006 0 0 1 377.77419999999995 231.9 A24.90919999999994 31.150000000000006 0 0 1 352.865 263.5 H302.5 Z" fill="none" stroke="#56c284"/>
<path d="M277.5 213.5 L302.5 213.5" fill="none" stroke="#56c284" stroke-width="1"/>
<path d="M277.5 250.5 L302.5 250.5" fill="none" stroke="#56c284" stroke-width="1"/>
<path d="M234.5 213.5 L277.5 213.5" fill="none" stroke="#70ace6" stroke-width="1"/>
<path d="M234.5 250.5 L277.5 250.5" fill="none" stroke="#70ace6" stroke-width="1"/>
<rect x="275" y="210" width="6" height="6" fill="#ff1010"/>
<rect x="275" y="247" width="6" height="6" fill="#ff1010"/>
<path d="M377.5 231.5 L402.5 231.5" fill="none" stroke="#56c284" stroke-width="1"/>
<rect x="399" y="229" width="6" height="6" fill="#ff1010"/>
<path d="M302.5 306.5 H352.865 A24.90919999999994 31.150000000000006 0 0 1 377.77419999999995 337.81 A24.90919999999994 31.150000000000006 0 0 1 352.865 368.5 H302.5 A39.5 39.5 0 0 0 302.5 306.5 Z" fill="none" stroke="#56c284"/>
<path d="M234.5 325.5 L290.5 325.5" fill="none" stroke="#70ace6" stroke-width="1"/>
<path d="M234.5 350.5 L290.5 350.5" fill="none" stroke="#70ace6" stroke-width="1"/>
<path d="M290.5 325.5 H314.87847 M290.5 350.5 H314.87847" stroke="#56c284" fill="none"/>
<rect x="287" y="322" width="6" height="6" fill="#ff1010"/>
<rect x="287" y="347" width="6" height="6" fill="#ff1010"/>
<path d="M377.5 337.5 L402.5 337.5" fill="none" stroke="#56c284" stroke-width="1"/>
<rect x="399" y="335" width="6" height="6" fill="#ff1010"/>
<path d="M402.5 231.5 L539.5 231.5 L539.5 250.5 L632.5 250.5" fill="none" stroke="#70ace6" stroke-width="1"/>
<path d="M402.5 337.5 L539.5 337.5 L539.5 287.5 L632.5 287.5" fill="none" stroke="#70ace6" stroke-width="1"/>
<path d="M657.5 231.5 L707.5 231.5 L732.5 250.5 L732.5 294.5 L707.5 312.5 L657.5 312.5 L657.5 231.5" fill="none" stroke="#56c284" stroke-width="1"/>
<path d="M632.5 250.5 L657.5 250.5" fill="none" stroke="#56c284" stroke-width="1"/>
<rect x="630" y="247" width="6" height="6" fill="#ff1010"/>
<path d="M632.5 287.5 L657.5 287.5" fill="none" stroke="#56c284" stroke-width="1"/>
<rect x="630" y="285" width="6" height="6" fill="#ff1010"/>
<path d="M732.5 269.5 L757.5 269.5" fill="none" stroke="#56c284" stroke-width="1"/>
<rect x="754" y="266" width="6" height="6" fill="#ff1010"/>
<path d="M688.5 312.5 L688.5 337.5" fill="none" stroke="#56c284" stroke-width="1"/>
<rect x="686" y="335" width="6" height="6" fill="#ff1010"/>
<path d="M688.5 337.5 L688.5 362.5" fill="none" stroke="#70ace6" stroke-width="1"/>
<path d="M757.5 269.5 L863.5 269.5 L863.5 368.5 L894.5 368.5" fill="none" stroke="#70ace6" stroke-width="1"/>
<path d="M919.5 350.5 L968.5 350.5 L993.5 368.5 L993.5 412.5 L968.5 431.5 L919.5 431.5 L919.5 350.5" fill="none" stroke="#56c284" stroke-width="1"/>
<path d="M894.5 368.5 L919.5 368.5" fill="none" stroke="#56c284" stroke-width="1"/>
<rect x="891" y="366" width="6" height="6" fill="#ff1010"/>
<path d="M894.5 406.5 L919.5 406.5" fill="none" stroke="#56c284" stroke-width="1"/>
<rect x="891" y="403" width="6" height="6" fill="#ff1010"/>
<path d="M993.5 387.5 L1018.5 387.5" fill="none" stroke="#56c284" stroke-width="1"/>
<rect x="1016" y="384" width="6" height="6" fill="#ff1010"/>
<path d="M950.5 431.5 L950.5 456.5" fill="none" stroke="#56c284" stroke-width="1"/>
<rect x="947" y="453" width="6" height="6" fill="#ff1010"/>
<path d="M1018.5 387.5 L1062.5 387.5" fill="none" stroke="#70ace6" stroke-width="1"/>
<path d="M1062 382.0 H1068.5 L1075 387.5 L1068.5 393.0 H1062 Z" fill="#ff1010"/>
<path d="M950.5 456.5 L950.5 499.5" fill="none" stroke="#70ace6" stroke-width="1"/>
<path d="M894.5 406.5 L863.5 406.5 L863.5 568.5 L688.5 568.5" fill="none" stroke="#70ace6" stroke-width="1"/>
<path d="M657.5 431.5 L719.5 443.5 L719.5 518.5 L657.5 530.5 L657.5 493.5 L671.08003 481.1 L657.5 468.5 Z" fill="none" stroke="#56c284"/>
<path d="M688.5 437.5 L688.5 412.5" fill="none" stroke="#56c284" stroke-width="1"/>
<rect x="686" y="409" width="6" height="6" fill="#ff1010"/>
<path d="M688.5 412.5 L688.5 387.5" fill="none" stroke="#70ace6" stroke-width="1"/>
<path d="M632.5 449.5 L657.5 449.5" fill="none" stroke="#56c284" stroke-width="1"/>
<rect x="630" y="447" width="6" height="6" fill="#ff1010"/>
<path d="M576.5 449.5 L632.5 449.5" fill="none" stroke="#70ace6" stroke-width="1"/>
<path d="M632.5 512.5 L657.5 512.5" fill="none" stroke="#56c284" stroke-width="1"/>
<rect x="630" y="509" width="6" height="6" fill="#ff1010"/>
<path d="M501.5 512.5 L632.5 512.5" fill="none" stroke="#70ace6" stroke-width="1"/>
<path d="M719.5 481.5 L744.5 481.5" fill="none" stroke="#56c284" stroke-width="1"/>
<rect x="742" y="478" width="6" height="6" fill="#ff1010"/>
<path d="M744.5 481.5 L794.5 481.5" fill="none" stroke="#70ace6" stroke-width="1"/>
<path d="M794.0 476.0 H800.5 L807.0 481.5 L800.5 487.0 H794.0 Z" fill="#ff1010"/>
<path d="M688.5 524.5 L688.5 549.5" fill="none" stroke="#56c284" stroke-width="1"/>
<rect x="686" y="546" width="6" height="6" fill="#ff1010"/>
<path d="M688.5 549.5 L688.5 568.5" fill="none" stroke="#70ace6" stroke-width="1"/>
<path d="M402.5 474.5 L452.5 474.5 L476.5 493.5 L476.5 537.5 L452.5 555.5 L402.5 555.5 L402.5 474.5" fill="none" stroke="#56c284" stroke-width="1"/>
<path d="M377.5 493.5 L402.5 493.5" fill="none" stroke="#56c284" stroke-width="1"/>
<rect x="374" y="490" width="6" height="6" fill="#ff1010"/>
<path d="M377.5 530.5 L402.5 530.5" fill="none" stroke="#56c284" stroke-width="1"/>
<rect x="374" y="528" width="6" height="6" fill="#ff1010"/>
<path d="M476.5 512.5 L501.5 512.5" fill="none" stroke="#56c284" stroke-width="1"/>
<rect x="499" y="509" width="6" height="6" fill="#ff1010"/>
<path d="M433.5 555.5 L433.5 580.5" fill="none" stroke="#56c284" stroke-width="1"/>
<rect x="430" y="578" width="6" height="6" fill="#ff1010"/>
<path d="M433.5 580.5 L433.5 624.5" fill="none" stroke="#70ace6" stroke-width="1"/>
<path d="M252.5 468.5 L303.0466 493.56000000000006 L252.5 518.5 Z" fill="none" stroke="#56c284"/>
<path d="M306.5 487.5 H312.5 L315.5 491.5 V494.5 L312.5 499.5 H306.5 L302.5 494.5 V491.5 Z" fill="none" stroke="#56c284"/>
<path d="M227.5 493.5 L252.5 493.5" fill="none" stroke="#56c284" stroke-width="1"/>
<rect x="225" y="490" width="6" height="6" fill="#ff1010"/>
<path d="M315.5 493.5 L339.5 493.5" fill="none" stroke="#56c284" stroke-width="1"/>
<rect x="337" y="490" width="6" height="6" fill="#ff1010"/>
<path d="M339.5 493.5 L377.5 493.5" fill="none" stroke="#70ace6" stroke-width="1"/>
<path d="M227.5 493.5 L190.5 493.5 L190.5 530.5 L377.5 530.5" fill="none" stroke="#70ace6" stroke-width="1"/>
<path d="M80 203h1v1h-1zM80 204h1v1h-1zM81 204h1v1h-1zM79 205h1v1h-1zM82 205h1v1h-1zM79 206h1v1h-1zM82 206h1v1h-1zM79 207h1v1h-1zM80 207h1v1h-1zM81 207h1v1h-1zM82 207h1v1h-1zM78 208h1v1h-1zM83 208h1v1h-1zM78 209h1v1h-1zM83 209h1v1h-1z" fill="#ff3a3a"/>
<path d="M79 228h1v1h-1zM80 228h1v1h-1zM81 228h1v1h-1zM82 228h1v1h-1zM79 229h1v1h-1zM83 229h1v1h-1zM79 230h1v1h-1zM83 230h1v1h-1zM79 231h1v1h-1zM80 231h1v1h-1zM81 231h1v1h-1zM82 231h1v1h-1zM83 231h1v1h-1zM79 232h1v1h-1zM83 232h1v1h-1zM79 233h1v1h-1zM83 233h1v1h-1zM79 234h1v1h-1zM80 234h1v1h-1zM81 234h1v1h-1zM82 234h1v1h-1zM83 234h1v1h-1z" fill="#ff3a3a"/>
<path d="M71 255h1v1h-1zM72 255h1v1h-1zM73 255h1v1h-1zM70 256h1v1h-1zM70 257h1v1h-1zM70 258h1v1h-1zM71 259h1v1h-1zM72 259h1v1h-1zM73 259h1v1h-1zM76 253h1v1h-1zM75 255h1v1h-1zM76 255h1v1h-1zM76 256h1v1h-1zM76 257h1v1h-1zM76 258h1v1h-1zM75 259h1v1h-1zM76 259h1v1h-1zM77 259h1v1h-1zM79 255h1v1h-1zM80 255h1v1h-1zM81 255h1v1h-1zM82 255h1v1h-1zM79 256h1v1h-1zM83 256h1v1h-1zM79 257h1v1h-1zM83 257h1v1h-1zM79 258h1v1h-1zM83 258h1v1h-1zM79 259h1v1h-1zM83 259h1v1h-1z" fill="#ff3a3a"/>
<path d="M74 278h1v1h-1zM75 278h1v1h-1zM76 278h1v1h-1zM77 278h1v1h-1zM74 279h1v1h-1zM74 280h1v1h-1zM74 281h1v1h-1zM75 281h1v1h-1zM76 281h1v1h-1zM74 282h1v1h-1zM74 283h1v1h-1zM74 284h1v1h-1zM80 278h1v1h-1zM81 278h1v1h-1zM82 278h1v1h-1zM79 279h1v1h-1zM83 279h1v1h-1zM79 280h1v1h-1zM82 280h1v1h-1zM83 280h1v1h-1zM79 281h1v1h-1zM81 281h1v1h-1zM83 281h1v1h-1zM79 282h1v1h-1zM80 282h1v1h-1zM83 282h1v1h-1zM79 283h1v1h-1zM83 283h1v1h-1zM80 284h1v1h-1zM81 284h1v1h-1zM82 284h1v1h-1z" fill="#ff3a3a"/>
<path d="M76 303h1v1h-1zM77 303h1v1h-1zM78 303h1v1h-1zM79 303h1v1h-1zM76 304h1v1h-1zM76 305h1v1h-1zM76 306h1v1h-1zM77 306h1v1h-1zM78 306h1v1h-1zM76 307h1v1h-1zM76 308h1v1h-1zM76 309h1v1h-1zM82 303h1v1h-1zM81 304h1v1h-1zM82 304h1v1h-1zM82 305h1v1h-1zM82 306h1v1h-1zM82 307h1v1h-1zM82 308h1v1h-1zM81 309h1v1h-1zM82 309h1v1h-1zM83 309h1v1h-1z" fill="#ff3a3a"/>
<path d="M239 203h1v1h-1zM239 204h1v1h-1zM240 204h1v1h-1zM238 205h1v1h-1zM241 205h1v1h-1zM238 206h1v1h-1zM241 206h1v1h-1zM238 207h1v1h-1zM239 207h1v1h-1zM240 207h1v1h-1zM241 207h1v1h-1zM237 208h1v1h-1zM242 208h1v1h-1zM237 209h1v1h-1zM242 209h1v1h-1z" fill="#80bcec"/>
<path d="M237 240h1v1h-1zM238 240h1v1h-1zM239 240h1v1h-1zM240 240h1v1h-1zM237 241h1v1h-1zM241 241h1v1h-1zM237 242h1v1h-1zM241 242h1v1h-1zM237 243h1v1h-1zM238 243h1v1h-1zM239 243h1v1h-1zM240 243h1v1h-1zM241 243h1v1h-1zM237 244h1v1h-1zM241 244h1v1h-1zM237 245h1v1h-1zM241 245h1v1h-1zM237 246h1v1h-1zM238 246h1v1h-1zM239 246h1v1h-1zM240 246h1v1h-1zM241 246h1v1h-1z" fill="#80bcec"/>
<path d="M326 221h1v1h-1zM327 221h1v1h-1zM328 221h1v1h-1zM329 222h1v1h-1zM326 223h1v1h-1zM327 223h1v1h-1zM328 223h1v1h-1zM329 223h1v1h-1zM325 224h1v1h-1zM329 224h1v1h-1zM326 225h1v1h-1zM327 225h1v1h-1zM328 225h1v1h-1zM329 225h1v1h-1zM331 221h1v1h-1zM332 221h1v1h-1zM333 221h1v1h-1zM334 221h1v1h-1zM331 222h1v1h-1zM335 222h1v1h-1zM331 223h1v1h-1zM335 223h1v1h-1zM331 224h1v1h-1zM335 224h1v1h-1zM331 225h1v1h-1zM335 225h1v1h-1zM341 219h1v1h-1zM341 220h1v1h-1zM338 221h1v1h-1zM339 221h1v1h-1zM340 221h1v1h-1zM341 221h1v1h-1zM337 222h1v1h-1zM341 222h1v1h-1zM337 223h1v1h-1zM341 223h1v1h-1zM337 224h1v1h-1zM341 224h1v1h-1zM338 225h1v1h-1zM339 225h1v1h-1zM340 225h1v1h-1zM341 225h1v1h-1z" fill="#f2f2f2"/>
<path d="M328 232h1v1h-1zM329 232h1v1h-1zM330 232h1v1h-1zM331 232h1v1h-1zM332 232h1v1h-1zM328 233h1v1h-1zM328 234h1v1h-1zM328 235h1v1h-1zM329 235h1v1h-1zM330 235h1v1h-1zM331 235h1v1h-1zM328 236h1v1h-1zM328 237h1v1h-1zM328 238h1v1h-1zM329 238h1v1h-1zM330 238h1v1h-1zM331 238h1v1h-1zM332 238h1v1h-1zM334 232h1v1h-1zM335 232h1v1h-1zM336 232h1v1h-1zM337 232h1v1h-1zM334 233h1v1h-1zM338 233h1v1h-1zM334 234h1v1h-1zM338 234h1v1h-1zM334 235h1v1h-1zM335 235h1v1h-1zM336 235h1v1h-1zM337 235h1v1h-1zM338 235h1v1h-1zM334 236h1v1h-1zM338 236h1v1h-1zM334 237h1v1h-1zM338 237h1v1h-1zM334 238h1v1h-1zM335 238h1v1h-1zM336 238h1v1h-1zM337 238h1v1h-1zM338 238h1v1h-1z" fill="#f2f2f2"/>
<path d="M239 315h1v1h-1zM239 316h1v1h-1zM240 316h1v1h-1zM238 317h1v1h-1zM241 317h1v1h-1zM238 318h1v1h-1zM241 318h1v1h-1zM238 319h1v1h-1zM239 319h1v1h-1zM240 319h1v1h-1zM241 319h1v1h-1zM237 320h1v1h-1zM242 320h1v1h-1zM237 321h1v1h-1zM242 321h1v1h-1z" fill="#80bcec"/>
<path d="M237 340h1v1h-1zM238 340h1v1h-1zM239 340h1v1h-1zM240 340h1v1h-1zM237 341h1v1h-1zM241 341h1v1h-1zM237 342h1v1h-1zM241 342h1v1h-1zM237 343h1v1h-1zM238 343h1v1h-1zM239 343h1v1h-1zM240 343h1v1h-1zM241 343h1v1h-1zM237 344h1v1h-1zM241 344h1v1h-1zM237 345h1v1h-1zM241 345h1v1h-1zM237 346h1v1h-1zM238 346h1v1h-1zM239 346h1v1h-1zM240 346h1v1h-1zM241 346h1v1h-1z" fill="#80bcec"/>
<path d="M328 333h1v1h-1zM329 333h1v1h-1zM330 333h1v1h-1zM327 334h1v1h-1zM331 334h1v1h-1zM327 335h1v1h-1zM331 335h1v1h-1zM327 336h1v1h-1zM331 336h1v1h-1zM328 337h1v1h-1zM329 337h1v1h-1zM330 337h1v1h-1zM333 333h1v1h-1zM335 333h1v1h-1zM336 333h1v1h-1zM333 334h1v1h-1zM334 334h1v1h-1zM333 335h1v1h-1zM333 336h1v1h-1zM333 337h1v1h-1z" fill="#f2f2f2"/>
<path d="M335 338h1v1h-1zM336 338h1v1h-1zM337 338h1v1h-1zM338 338h1v1h-1zM339 338h1v1h-1z" fill="#f2f2f2"/>
<path d="M342 331h1v1h-1zM343 331h1v1h-1zM344 331h1v1h-1zM345 331h1v1h-1zM346 331h1v1h-1zM342 332h1v1h-1zM342 333h1v1h-1zM342 334h1v1h-1zM343 334h1v1h-1zM344 334h1v1h-1zM345 334h1v1h-1zM342 335h1v1h-1zM342 336h1v1h-1zM342 337h1v1h-1zM343 337h1v1h-1zM344 337h1v1h-1zM345 337h1v1h-1zM346 337h1v1h-1zM348 331h1v1h-1zM349 331h1v1h-1zM350 331h1v1h-1zM351 331h1v1h-1zM348 332h1v1h-1zM352 332h1v1h-1zM348 333h1v1h-1zM352 333h1v1h-1zM348 334h1v1h-1zM349 334h1v1h-1zM350 334h1v1h-1zM351 334h1v1h-1zM352 334h1v1h-1zM348 335h1v1h-1zM352 335h1v1h-1zM348 336h1v1h-1zM352 336h1v1h-1zM348 337h1v1h-1zM349 337h1v1h-1zM350 337h1v1h-1zM351 337h1v1h-1zM352 337h1v1h-1z" fill="#f2f2f2"/>
<path d="M663 247h1v1h-1zM663 248h1v1h-1zM664 248h1v1h-1zM662 249h1v1h-1zM665 249h1v1h-1zM662 250h1v1h-1zM665 250h1v1h-1zM662 251h1v1h-1zM663 251h1v1h-1zM664 251h1v1h-1zM665 251h1v1h-1zM661 252h1v1h-1zM666 252h1v1h-1zM661 253h1v1h-1zM666 253h1v1h-1z" fill="#ff3a3a"/>
<path d="M662 284h1v1h-1zM663 284h1v1h-1zM664 284h1v1h-1zM665 284h1v1h-1zM662 285h1v1h-1zM666 285h1v1h-1zM662 286h1v1h-1zM666 286h1v1h-1zM662 287h1v1h-1zM663 287h1v1h-1zM664 287h1v1h-1zM665 287h1v1h-1zM666 287h1v1h-1zM662 288h1v1h-1zM666 288h1v1h-1zM662 289h1v1h-1zM666 289h1v1h-1zM662 290h1v1h-1zM663 290h1v1h-1zM664 290h1v1h-1zM665 290h1v1h-1zM666 290h1v1h-1z" fill="#ff3a3a"/>
<path d="M722 266h1v1h-1zM723 266h1v1h-1zM724 266h1v1h-1zM725 266h1v1h-1zM726 266h1v1h-1zM726 267h1v1h-1zM725 268h1v1h-1zM724 269h1v1h-1zM723 270h1v1h-1zM722 271h1v1h-1zM722 272h1v1h-1zM723 272h1v1h-1zM724 272h1v1h-1zM725 272h1v1h-1zM726 272h1v1h-1z" fill="#ff3a3a"/>
<path d="M685 307h1v1h-1zM685 306h1v1h-1zM685 305h1v1h-1zM686 308h1v1h-1zM686 304h1v1h-1zM687 308h1v1h-1zM688 307h1v1h-1zM688 306h1v1h-1zM688 305h1v1h-1zM689 304h1v1h-1zM690 308h1v1h-1zM690 304h1v1h-1zM691 307h1v1h-1zM691 306h1v1h-1zM691 305h1v1h-1z" fill="#ff3a3a"/>
<path d="M670 269h1v1h-1zM675 269h1v1h-1zM670 270h1v1h-1zM671 270h1v1h-1zM674 270h1v1h-1zM675 270h1v1h-1zM670 271h1v1h-1zM672 271h1v1h-1zM673 271h1v1h-1zM675 271h1v1h-1zM670 272h1v1h-1zM672 272h1v1h-1zM673 272h1v1h-1zM675 272h1v1h-1zM670 273h1v1h-1zM675 273h1v1h-1zM670 274h1v1h-1zM675 274h1v1h-1zM670 275h1v1h-1zM675 275h1v1h-1z" fill="#f2f2f2"/>
<path d="M678 269h1v1h-1zM682 269h1v1h-1zM678 270h1v1h-1zM682 270h1v1h-1zM678 271h1v1h-1zM682 271h1v1h-1zM678 272h1v1h-1zM682 272h1v1h-1zM678 273h1v1h-1zM682 273h1v1h-1zM678 274h1v1h-1zM682 274h1v1h-1zM679 275h1v1h-1zM680 275h1v1h-1zM681 275h1v1h-1z" fill="#f2f2f2"/>
<path d="M684 269h1v1h-1zM688 269h1v1h-1zM684 270h1v1h-1zM688 270h1v1h-1zM685 271h1v1h-1zM687 271h1v1h-1zM686 272h1v1h-1zM685 273h1v1h-1zM687 273h1v1h-1zM684 274h1v1h-1zM688 274h1v1h-1zM684 275h1v1h-1zM688 275h1v1h-1z" fill="#f2f2f2"/>
<path d="M689 276h1v1h-1zM690 276h1v1h-1zM691 276h1v1h-1zM692 276h1v1h-1zM693 276h1v1h-1z" fill="#f2f2f2"/>
<path d="M696 269h1v1h-1zM697 269h1v1h-1zM698 269h1v1h-1zM699 269h1v1h-1zM700 269h1v1h-1zM696 270h1v1h-1zM696 271h1v1h-1zM696 272h1v1h-1zM697 272h1v1h-1zM698 272h1v1h-1zM699 272h1v1h-1zM696 273h1v1h-1zM696 274h1v1h-1zM696 275h1v1h-1zM697 275h1v1h-1zM698 275h1v1h-1zM699 275h1v1h-1zM700 275h1v1h-1z" fill="#f2f2f2"/>
<path d="M702 269h1v1h-1zM703 269h1v1h-1zM704 269h1v1h-1zM705 269h1v1h-1zM702 270h1v1h-1zM706 270h1v1h-1zM702 271h1v1h-1zM706 271h1v1h-1zM702 272h1v1h-1zM703 272h1v1h-1zM704 272h1v1h-1zM705 272h1v1h-1zM706 272h1v1h-1zM702 273h1v1h-1zM706 273h1v1h-1zM702 274h1v1h-1zM706 274h1v1h-1zM702 275h1v1h-1zM703 275h1v1h-1zM704 275h1v1h-1zM705 275h1v1h-1zM706 275h1v1h-1z" fill="#f2f2f2"/>
<path d="M925 365h1v1h-1zM925 366h1v1h-1zM926 366h1v1h-1zM924 367h1v1h-1zM927 367h1v1h-1zM924 368h1v1h-1zM927 368h1v1h-1zM924 369h1v1h-1zM925 369h1v1h-1zM926 369h1v1h-1zM927 369h1v1h-1zM923 370h1v1h-1zM928 370h1v1h-1zM923 371h1v1h-1zM928 371h1v1h-1z" fill="#ff3a3a"/>
<path d="M924 403h1v1h-1zM925 403h1v1h-1zM926 403h1v1h-1zM927 403h1v1h-1zM924 404h1v1h-1zM928 404h1v1h-1zM924 405h1v1h-1zM928 405h1v1h-1zM924 406h1v1h-1zM925 406h1v1h-1zM926 406h1v1h-1zM927 406h1v1h-1zM928 406h1v1h-1zM924 407h1v1h-1zM928 407h1v1h-1zM924 408h1v1h-1zM928 408h1v1h-1zM924 409h1v1h-1zM925 409h1v1h-1zM926 409h1v1h-1zM927 409h1v1h-1zM928 409h1v1h-1z" fill="#ff3a3a"/>
<path d="M984 384h1v1h-1zM985 384h1v1h-1zM986 384h1v1h-1zM987 384h1v1h-1zM988 384h1v1h-1zM988 385h1v1h-1zM987 386h1v1h-1zM986 387h1v1h-1zM985 388h1v1h-1zM984 389h1v1h-1zM984 390h1v1h-1zM985 390h1v1h-1zM986 390h1v1h-1zM987 390h1v1h-1zM988 390h1v1h-1z" fill="#ff3a3a"/>
<path d="M947 426h1v1h-1zM947 425h1v1h-1zM947 424h1v1h-1zM948 427h1v1h-1zM948 423h1v1h-1zM949 427h1v1h-1zM950 426h1v1h-1zM950 425h1v1h-1zM950 424h1v1h-1zM951 423h1v1h-1zM952 427h1v1h-1zM952 423h1v1h-1zM953 426h1v1h-1zM953 425h1v1h-1zM953 424h1v1h-1z" fill="#ff3a3a"/>
<path d="M932 388h1v1h-1zM937 388h1v1h-1zM932 389h1v1h-1zM933 389h1v1h-1zM936 389h1v1h-1zM937 389h1v1h-1zM932 390h1v1h-1zM934 390h1v1h-1zM935 390h1v1h-1zM937 390h1v1h-1zM932 391h1v1h-1zM934 391h1v1h-1zM935 391h1v1h-1zM937 391h1v1h-1zM932 392h1v1h-1zM937 392h1v1h-1zM932 393h1v1h-1zM937 393h1v1h-1zM932 394h1v1h-1zM937 394h1v1h-1z" fill="#f2f2f2"/>
<path d="M940 388h1v1h-1zM944 388h1v1h-1zM940 389h1v1h-1zM944 389h1v1h-1zM940 390h1v1h-1zM944 390h1v1h-1zM940 391h1v1h-1zM944 391h1v1h-1zM940 392h1v1h-1zM944 392h1v1h-1zM940 393h1v1h-1zM944 393h1v1h-1zM941 394h1v1h-1zM942 394h1v1h-1zM943 394h1v1h-1z" fill="#f2f2f2"/>
<path d="M946 388h1v1h-1zM950 388h1v1h-1zM946 389h1v1h-1zM950 389h1v1h-1zM947 390h1v1h-1zM949 390h1v1h-1zM948 391h1v1h-1zM947 392h1v1h-1zM949 392h1v1h-1zM946 393h1v1h-1zM950 393h1v1h-1zM946 394h1v1h-1zM950 394h1v1h-1z" fill="#f2f2f2"/>
<path d="M951 395h1v1h-1zM952 395h1v1h-1zM953 395h1v1h-1zM954 395h1v1h-1zM955 395h1v1h-1z" fill="#f2f2f2"/>
<path d="M958 388h1v1h-1zM959 388h1v1h-1zM960 388h1v1h-1zM961 388h1v1h-1zM962 388h1v1h-1zM958 389h1v1h-1zM958 390h1v1h-1zM958 391h1v1h-1zM959 391h1v1h-1zM960 391h1v1h-1zM961 391h1v1h-1zM958 392h1v1h-1zM958 393h1v1h-1zM958 394h1v1h-1zM959 394h1v1h-1zM960 394h1v1h-1zM961 394h1v1h-1zM962 394h1v1h-1z" fill="#f2f2f2"/>
<path d="M964 388h1v1h-1zM965 388h1v1h-1zM966 388h1v1h-1zM967 388h1v1h-1zM964 389h1v1h-1zM968 389h1v1h-1zM964 390h1v1h-1zM968 390h1v1h-1zM964 391h1v1h-1zM965 391h1v1h-1zM966 391h1v1h-1zM967 391h1v1h-1zM968 391h1v1h-1zM964 392h1v1h-1zM968 392h1v1h-1zM964 393h1v1h-1zM968 393h1v1h-1zM964 394h1v1h-1zM965 394h1v1h-1zM966 394h1v1h-1zM967 394h1v1h-1zM968 394h1v1h-1z" fill="#f2f2f2"/>
<path d="M408 490h1v1h-1zM408 491h1v1h-1zM409 491h1v1h-1zM407 492h1v1h-1zM410 492h1v1h-1zM407 493h1v1h-1zM410 493h1v1h-1zM407 494h1v1h-1zM408 494h1v1h-1zM409 494h1v1h-1zM410 494h1v1h-1zM406 495h1v1h-1zM411 495h1v1h-1zM406 496h1v1h-1zM411 496h1v1h-1z" fill="#ff3a3a"/>
<path d="M407 527h1v1h-1zM408 527h1v1h-1zM409 527h1v1h-1zM410 527h1v1h-1zM407 528h1v1h-1zM411 528h1v1h-1zM407 529h1v1h-1zM411 529h1v1h-1zM407 530h1v1h-1zM408 530h1v1h-1zM409 530h1v1h-1zM410 530h1v1h-1zM411 530h1v1h-1zM407 531h1v1h-1zM411 531h1v1h-1zM407 532h1v1h-1zM411 532h1v1h-1zM407 533h1v1h-1zM408 533h1v1h-1zM409 533h1v1h-1zM410 533h1v1h-1zM411 533h1v1h-1z" fill="#ff3a3a"/>
<path d="M467 509h1v1h-1zM468 509h1v1h-1zM469 509h1v1h-1zM470 509h1v1h-1zM471 509h1v1h-1zM471 510h1v1h-1zM470 511h1v1h-1zM469 512h1v1h-1zM468 513h1v1h-1zM467 514h1v1h-1zM467 515h1v1h-1zM468 515h1v1h-1zM469 515h1v1h-1zM470 515h1v1h-1zM471 515h1v1h-1z" fill="#ff3a3a"/>
<path d="M430 550h1v1h-1zM430 549h1v1h-1zM430 548h1v1h-1zM431 551h1v1h-1zM431 547h1v1h-1zM432 551h1v1h-1zM433 550h1v1h-1zM433 549h1v1h-1zM433 548h1v1h-1zM434 547h1v1h-1zM435 551h1v1h-1zM435 547h1v1h-1zM436 550h1v1h-1zM436 549h1v1h-1zM436 548h1v1h-1z" fill="#ff3a3a"/>
<path d="M415 512h1v1h-1zM420 512h1v1h-1zM415 513h1v1h-1zM416 513h1v1h-1zM419 513h1v1h-1zM420 513h1v1h-1zM415 514h1v1h-1zM417 514h1v1h-1zM418 514h1v1h-1zM420 514h1v1h-1zM415 515h1v1h-1zM417 515h1v1h-1zM418 515h1v1h-1zM420 515h1v1h-1zM415 516h1v1h-1zM420 516h1v1h-1zM415 517h1v1h-1zM420 517h1v1h-1zM415 518h1v1h-1zM420 518h1v1h-1z" fill="#f2f2f2"/>
<path d="M423 512h1v1h-1zM427 512h1v1h-1zM423 513h1v1h-1zM427 513h1v1h-1zM423 514h1v1h-1zM427 514h1v1h-1zM423 515h1v1h-1zM427 515h1v1h-1zM423 516h1v1h-1zM427 516h1v1h-1zM423 517h1v1h-1zM427 517h1v1h-1zM424 518h1v1h-1zM425 518h1v1h-1zM426 518h1v1h-1z" fill="#f2f2f2"/>
<path d="M429 512h1v1h-1zM433 512h1v1h-1zM429 513h1v1h-1zM433 513h1v1h-1zM430 514h1v1h-1zM432 514h1v1h-1zM431 515h1v1h-1zM430 516h1v1h-1zM432 516h1v1h-1zM429 517h1v1h-1zM433 517h1v1h-1zM429 518h1v1h-1zM433 518h1v1h-1z" fill="#f2f2f2"/>
<path d="M434 519h1v1h-1zM435 519h1v1h-1zM436 519h1v1h-1zM437 519h1v1h-1zM438 519h1v1h-1z" fill="#f2f2f2"/>
<path d="M441 512h1v1h-1zM442 512h1v1h-1zM443 512h1v1h-1zM444 512h1v1h-1zM445 512h1v1h-1zM441 513h1v1h-1zM441 514h1v1h-1zM441 515h1v1h-1zM442 515h1v1h-1zM443 515h1v1h-1zM444 515h1v1h-1zM441 516h1v1h-1zM441 517h1v1h-1zM441 518h1v1h-1zM442 518h1v1h-1zM443 518h1v1h-1zM444 518h1v1h-1zM445 518h1v1h-1z" fill="#f2f2f2"/>
<path d="M447 512h1v1h-1zM448 512h1v1h-1zM449 512h1v1h-1zM450 512h1v1h-1zM447 513h1v1h-1zM451 513h1v1h-1zM447 514h1v1h-1zM451 514h1v1h-1zM447 515h1v1h-1zM448 515h1v1h-1zM449 515h1v1h-1zM450 515h1v1h-1zM451 515h1v1h-1zM447 516h1v1h-1zM451 516h1v1h-1zM447 517h1v1h-1zM451 517h1v1h-1zM447 518h1v1h-1zM448 518h1v1h-1zM449 518h1v1h-1zM450 518h1v1h-1zM451 518h1v1h-1z" fill="#f2f2f2"/>
<path d="M678 354h1v1h-1zM678 353h1v1h-1zM678 352h1v1h-1zM678 351h1v1h-1zM679 354h1v1h-1zM680 354h1v1h-1zM681 354h1v1h-1zM681 353h1v1h-1zM681 352h1v1h-1zM682 354h1v1h-1zM683 354h1v1h-1zM684 354h1v1h-1zM678 348h1v1h-1zM678 347h1v1h-1zM678 346h1v1h-1zM679 349h1v1h-1zM679 345h1v1h-1zM680 349h1v1h-1zM680 346h1v1h-1zM680 345h1v1h-1zM681 349h1v1h-1zM681 347h1v1h-1zM681 345h1v1h-1zM682 349h1v1h-1zM682 348h1v1h-1zM682 345h1v1h-1zM683 349h1v1h-1zM683 345h1v1h-1zM684 348h1v1h-1zM684 347h1v1h-1zM684 346h1v1h-1z" fill="#80bcec"/>
<path d="M939 485h1v1h-1zM939 484h1v1h-1zM939 483h1v1h-1zM939 482h1v1h-1zM940 485h1v1h-1zM941 485h1v1h-1zM942 485h1v1h-1zM942 484h1v1h-1zM942 483h1v1h-1zM943 485h1v1h-1zM944 485h1v1h-1zM945 485h1v1h-1zM939 479h1v1h-1zM940 480h1v1h-1zM940 479h1v1h-1zM941 479h1v1h-1zM942 479h1v1h-1zM943 479h1v1h-1zM944 479h1v1h-1zM945 480h1v1h-1zM945 479h1v1h-1zM945 478h1v1h-1z" fill="#80bcec"/>
<path d="M422 610h1v1h-1zM422 609h1v1h-1zM422 608h1v1h-1zM422 607h1v1h-1zM423 610h1v1h-1zM424 610h1v1h-1zM425 610h1v1h-1zM425 609h1v1h-1zM425 608h1v1h-1zM426 610h1v1h-1zM427 610h1v1h-1zM428 610h1v1h-1zM422 604h1v1h-1zM422 603h1v1h-1zM422 602h1v1h-1zM423 605h1v1h-1zM423 601h1v1h-1zM424 605h1v1h-1zM424 602h1v1h-1zM424 601h1v1h-1zM425 605h1v1h-1zM425 603h1v1h-1zM425 601h1v1h-1zM426 605h1v1h-1zM426 604h1v1h-1zM426 601h1v1h-1zM427 605h1v1h-1zM427 601h1v1h-1zM428 604h1v1h-1zM428 603h1v1h-1zM428 602h1v1h-1z" fill="#80bcec"/>
<path d="M1078 384h1v1h-1zM1079 384h1v1h-1zM1080 384h1v1h-1zM1081 384h1v1h-1zM1082 384h1v1h-1zM1082 385h1v1h-1zM1081 386h1v1h-1zM1080 387h1v1h-1zM1079 388h1v1h-1zM1078 389h1v1h-1zM1078 390h1v1h-1zM1079 390h1v1h-1zM1080 390h1v1h-1zM1081 390h1v1h-1zM1082 390h1v1h-1z" fill="#ff3a3a"/>
<path d="M680 398h1v1h-1zM680 397h1v1h-1zM680 396h1v1h-1zM681 399h1v1h-1zM682 399h1v1h-1zM683 399h1v1h-1zM684 398h1v1h-1zM684 397h1v1h-1zM684 396h1v1h-1zM678 393h1v1h-1zM680 394h1v1h-1zM680 393h1v1h-1zM681 393h1v1h-1zM682 393h1v1h-1zM683 393h1v1h-1zM684 394h1v1h-1zM684 393h1v1h-1zM684 392h1v1h-1zM680 390h1v1h-1zM680 389h1v1h-1zM680 388h1v1h-1zM680 387h1v1h-1zM681 390h1v1h-1zM681 386h1v1h-1zM682 390h1v1h-1zM682 386h1v1h-1zM683 390h1v1h-1zM683 386h1v1h-1zM684 390h1v1h-1zM684 386h1v1h-1z" fill="#80bcec"/>
<path d="M588 439h1v1h-1zM588 440h1v1h-1zM589 440h1v1h-1zM587 441h1v1h-1zM590 441h1v1h-1zM587 442h1v1h-1zM590 442h1v1h-1zM587 443h1v1h-1zM588 443h1v1h-1zM589 443h1v1h-1zM590 443h1v1h-1zM586 444h1v1h-1zM591 444h1v1h-1zM586 445h1v1h-1zM591 445h1v1h-1z" fill="#80bcec"/>
<path d="M663 446h1v1h-1zM663 447h1v1h-1zM664 447h1v1h-1zM662 448h1v1h-1zM665 448h1v1h-1zM662 449h1v1h-1zM665 449h1v1h-1zM662 450h1v1h-1zM663 450h1v1h-1zM664 450h1v1h-1zM665 450h1v1h-1zM661 451h1v1h-1zM666 451h1v1h-1zM661 452h1v1h-1zM666 452h1v1h-1z" fill="#ff3a3a"/>
<path d="M661 509h1v1h-1zM662 509h1v1h-1zM663 509h1v1h-1zM664 509h1v1h-1zM661 510h1v1h-1zM665 510h1v1h-1zM661 511h1v1h-1zM665 511h1v1h-1zM661 512h1v1h-1zM662 512h1v1h-1zM663 512h1v1h-1zM664 512h1v1h-1zM665 512h1v1h-1zM661 513h1v1h-1zM665 513h1v1h-1zM661 514h1v1h-1zM665 514h1v1h-1zM661 515h1v1h-1zM662 515h1v1h-1zM663 515h1v1h-1zM664 515h1v1h-1zM665 515h1v1h-1z" fill="#ff3a3a"/>
<path d="M688 453h1v1h-1zM688 452h1v1h-1zM688 451h1v1h-1zM689 454h1v1h-1zM690 454h1v1h-1zM691 454h1v1h-1zM692 453h1v1h-1zM692 452h1v1h-1zM692 451h1v1h-1zM686 448h1v1h-1zM688 449h1v1h-1zM688 448h1v1h-1zM689 448h1v1h-1zM690 448h1v1h-1zM691 448h1v1h-1zM692 449h1v1h-1zM692 448h1v1h-1zM692 447h1v1h-1zM688 445h1v1h-1zM688 444h1v1h-1zM688 443h1v1h-1zM688 442h1v1h-1zM689 445h1v1h-1zM689 441h1v1h-1zM690 445h1v1h-1zM690 441h1v1h-1zM691 445h1v1h-1zM691 441h1v1h-1zM692 445h1v1h-1zM692 441h1v1h-1z" fill="#ff3a3a"/>
<path d="M688 519h1v1h-1zM688 518h1v1h-1zM688 517h1v1h-1zM689 520h1v1h-1zM690 520h1v1h-1zM691 520h1v1h-1zM692 519h1v1h-1zM692 518h1v1h-1zM692 517h1v1h-1zM688 514h1v1h-1zM688 513h1v1h-1zM688 512h1v1h-1zM689 515h1v1h-1zM689 511h1v1h-1zM690 515h1v1h-1zM690 511h1v1h-1zM691 515h1v1h-1zM691 511h1v1h-1zM692 514h1v1h-1zM692 513h1v1h-1zM692 512h1v1h-1zM688 509h1v1h-1zM688 505h1v1h-1zM689 509h1v1h-1zM689 505h1v1h-1zM690 509h1v1h-1zM690 505h1v1h-1zM691 509h1v1h-1zM691 505h1v1h-1zM692 508h1v1h-1zM692 507h1v1h-1zM692 506h1v1h-1zM692 505h1v1h-1zM686 502h1v1h-1zM687 502h1v1h-1zM688 503h1v1h-1zM688 502h1v1h-1zM688 501h1v1h-1zM688 500h1v1h-1zM689 502h1v1h-1zM690 502h1v1h-1zM691 502h1v1h-1zM692 501h1v1h-1zM692 500h1v1h-1z" fill="#ff3a3a"/>
<path d="M712 479h1v1h-1zM713 479h1v1h-1zM714 479h1v1h-1zM711 480h1v1h-1zM712 481h1v1h-1zM713 481h1v1h-1zM714 482h1v1h-1zM711 483h1v1h-1zM712 483h1v1h-1zM713 483h1v1h-1z" fill="#ff3a3a"/>
<path d="M675 475h1v1h-1zM676 475h1v1h-1zM677 475h1v1h-1zM678 475h1v1h-1zM675 476h1v1h-1zM675 477h1v1h-1zM675 478h1v1h-1zM676 478h1v1h-1zM677 478h1v1h-1zM675 479h1v1h-1zM675 480h1v1h-1zM675 481h1v1h-1zM682 475h1v1h-1zM682 476h1v1h-1zM683 476h1v1h-1zM681 477h1v1h-1zM684 477h1v1h-1zM681 478h1v1h-1zM684 478h1v1h-1zM681 479h1v1h-1zM682 479h1v1h-1zM683 479h1v1h-1zM684 479h1v1h-1zM680 480h1v1h-1zM685 480h1v1h-1zM680 481h1v1h-1zM685 481h1v1h-1z" fill="#f2f2f2"/>
<path d="M685 482h1v1h-1zM686 482h1v1h-1zM687 482h1v1h-1zM688 482h1v1h-1zM689 482h1v1h-1z" fill="#f2f2f2"/>
<path d="M692 475h1v1h-1zM693 475h1v1h-1zM694 475h1v1h-1zM695 475h1v1h-1zM696 475h1v1h-1zM692 476h1v1h-1zM692 477h1v1h-1zM692 478h1v1h-1zM693 478h1v1h-1zM694 478h1v1h-1zM695 478h1v1h-1zM692 479h1v1h-1zM692 480h1v1h-1zM692 481h1v1h-1zM693 481h1v1h-1zM694 481h1v1h-1zM695 481h1v1h-1zM696 481h1v1h-1zM698 475h1v1h-1zM699 475h1v1h-1zM700 475h1v1h-1zM701 475h1v1h-1zM698 476h1v1h-1zM702 476h1v1h-1zM698 477h1v1h-1zM702 477h1v1h-1zM698 478h1v1h-1zM699 478h1v1h-1zM700 478h1v1h-1zM701 478h1v1h-1zM702 478h1v1h-1zM698 479h1v1h-1zM702 479h1v1h-1zM698 480h1v1h-1zM702 480h1v1h-1zM698 481h1v1h-1zM699 481h1v1h-1zM700 481h1v1h-1zM701 481h1v1h-1zM702 481h1v1h-1z" fill="#f2f2f2"/>
<path d="M761 472h1v1h-1zM762 472h1v1h-1zM763 472h1v1h-1zM760 473h1v1h-1zM760 474h1v1h-1zM760 475h1v1h-1zM761 476h1v1h-1zM762 476h1v1h-1zM763 476h1v1h-1zM766 472h1v1h-1zM767 472h1v1h-1zM768 472h1v1h-1zM765 473h1v1h-1zM769 473h1v1h-1zM765 474h1v1h-1zM769 474h1v1h-1zM765 475h1v1h-1zM769 475h1v1h-1zM766 476h1v1h-1zM767 476h1v1h-1zM768 476h1v1h-1zM771 472h1v1h-1zM775 472h1v1h-1zM771 473h1v1h-1zM775 473h1v1h-1zM771 474h1v1h-1zM775 474h1v1h-1zM771 475h1v1h-1zM775 475h1v1h-1zM772 476h1v1h-1zM773 476h1v1h-1zM774 476h1v1h-1zM775 476h1v1h-1zM778 470h1v1h-1zM778 471h1v1h-1zM777 472h1v1h-1zM778 472h1v1h-1zM779 472h1v1h-1zM780 472h1v1h-1zM778 473h1v1h-1zM778 474h1v1h-1zM778 475h1v1h-1zM779 476h1v1h-1zM780 476h1v1h-1z" fill="#80bcec"/>
<path d="M812 480h1v1h-1zM813 480h1v1h-1zM814 480h1v1h-1zM811 481h1v1h-1zM811 482h1v1h-1zM811 483h1v1h-1zM812 484h1v1h-1zM813 484h1v1h-1zM814 484h1v1h-1zM817 480h1v1h-1zM818 480h1v1h-1zM819 480h1v1h-1zM816 481h1v1h-1zM820 481h1v1h-1zM816 482h1v1h-1zM820 482h1v1h-1zM816 483h1v1h-1zM820 483h1v1h-1zM817 484h1v1h-1zM818 484h1v1h-1zM819 484h1v1h-1zM822 480h1v1h-1zM826 480h1v1h-1zM822 481h1v1h-1zM826 481h1v1h-1zM822 482h1v1h-1zM826 482h1v1h-1zM822 483h1v1h-1zM826 483h1v1h-1zM823 484h1v1h-1zM824 484h1v1h-1zM825 484h1v1h-1zM826 484h1v1h-1zM829 478h1v1h-1zM829 479h1v1h-1zM828 480h1v1h-1zM829 480h1v1h-1zM830 480h1v1h-1zM831 480h1v1h-1zM829 481h1v1h-1zM829 482h1v1h-1zM829 483h1v1h-1zM830 484h1v1h-1zM831 484h1v1h-1z" fill="#ff3a3a"/>
<path d="M255 487h1v1h-1zM256 487h1v1h-1zM257 487h1v1h-1zM254 488h1v1h-1zM254 489h1v1h-1zM254 490h1v1h-1zM255 490h1v1h-1zM256 490h1v1h-1zM257 490h1v1h-1zM254 491h1v1h-1zM258 491h1v1h-1zM254 492h1v1h-1zM258 492h1v1h-1zM255 493h1v1h-1zM256 493h1v1h-1zM257 493h1v1h-1zM260 489h1v1h-1zM264 489h1v1h-1zM260 490h1v1h-1zM264 490h1v1h-1zM260 491h1v1h-1zM264 491h1v1h-1zM260 492h1v1h-1zM264 492h1v1h-1zM261 493h1v1h-1zM262 493h1v1h-1zM263 493h1v1h-1zM264 493h1v1h-1zM269 487h1v1h-1zM269 488h1v1h-1zM268 489h1v1h-1zM268 490h1v1h-1zM267 491h1v1h-1zM267 492h1v1h-1zM266 493h1v1h-1zM272 487h1v1h-1zM273 487h1v1h-1zM274 487h1v1h-1zM271 488h1v1h-1zM275 488h1v1h-1zM271 489h1v1h-1zM274 489h1v1h-1zM275 489h1v1h-1zM271 490h1v1h-1zM273 490h1v1h-1zM275 490h1v1h-1zM271 491h1v1h-1zM272 491h1v1h-1zM275 491h1v1h-1zM271 492h1v1h-1zM275 492h1v1h-1zM272 493h1v1h-1zM273 493h1v1h-1zM274 493h1v1h-1zM277 493h1v1h-1zM280 487h1v1h-1zM281 487h1v1h-1zM282 487h1v1h-1zM279 488h1v1h-1zM279 489h1v1h-1zM279 490h1v1h-1zM280 490h1v1h-1zM281 490h1v1h-1zM282 490h1v1h-1zM279 491h1v1h-1zM283 491h1v1h-1zM279 492h1v1h-1zM283 492h1v1h-1zM280 493h1v1h-1zM281 493h1v1h-1zM282 493h1v1h-1zM285 489h1v1h-1zM289 489h1v1h-1zM285 490h1v1h-1zM289 490h1v1h-1zM285 491h1v1h-1zM289 491h1v1h-1zM285 492h1v1h-1zM289 492h1v1h-1zM286 493h1v1h-1zM287 493h1v1h-1zM288 493h1v1h-1zM289 493h1v1h-1z" fill="#f2f2f2"/>
<path d="M331 520h1v1h-1zM332 520h1v1h-1zM333 520h1v1h-1zM334 520h1v1h-1zM331 521h1v1h-1zM335 521h1v1h-1zM331 522h1v1h-1zM335 522h1v1h-1zM331 523h1v1h-1zM332 523h1v1h-1zM333 523h1v1h-1zM334 523h1v1h-1zM335 523h1v1h-1zM331 524h1v1h-1zM335 524h1v1h-1zM331 525h1v1h-1zM335 525h1v1h-1zM331 526h1v1h-1zM332 526h1v1h-1zM333 526h1v1h-1zM334 526h1v1h-1zM335 526h1v1h-1z" fill="#80bcec"/>
</svg>
</body></html>
